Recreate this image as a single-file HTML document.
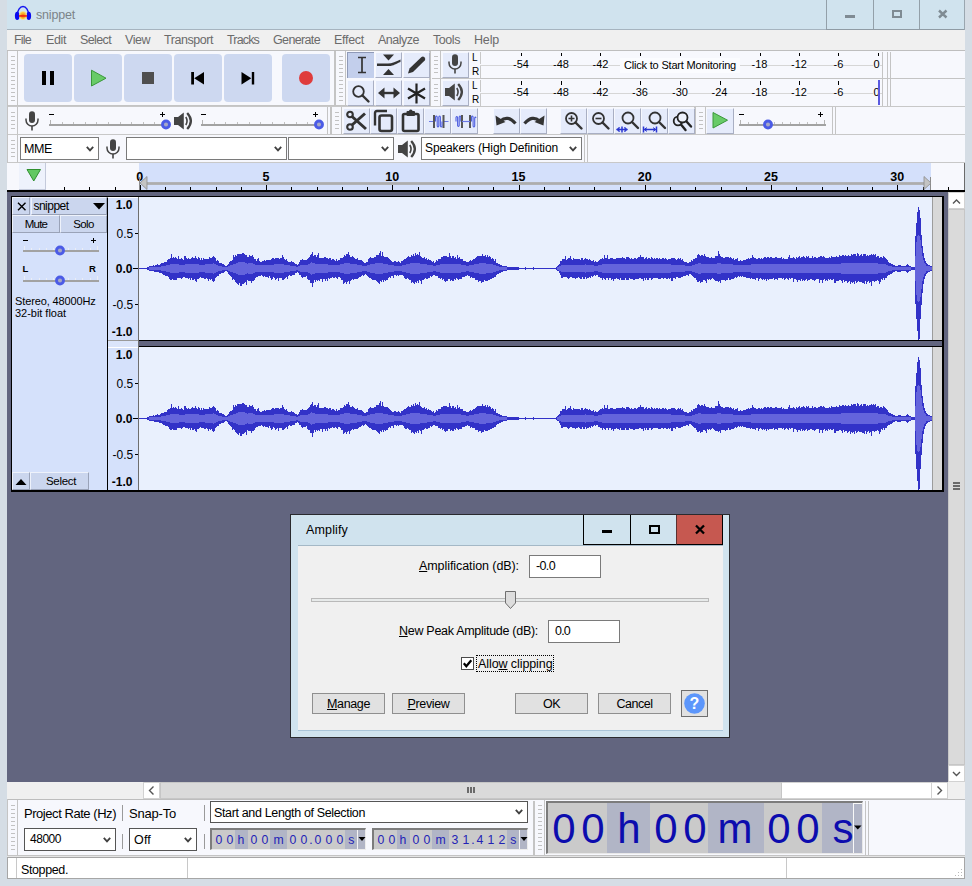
<!DOCTYPE html>
<html><head><meta charset="utf-8"><title>snippet</title>
<style>
html,body{margin:0;padding:0}
body{width:972px;height:886px;overflow:hidden;background:#d5dde5;position:relative;font-family:"Liberation Sans",sans-serif;font-size:12px;line-height:1.15}
div,svg{position:absolute;box-sizing:border-box}
svg{overflow:visible}
</style></head><body>
<div style="left:7px;top:0px;width:958px;height:879px;background:#f7f8fd;"></div>
<div style="left:7px;top:0px;width:958px;height:30px;background:#d0e3ee;border-bottom:1px solid #a6b4bf;"></div>
<div style="left:826px;top:29px;width:139px;height:1px;background:#8f9ba4;"></div>
<div style="left:964px;top:0px;width:1px;height:30px;background:#9aa6af;"></div>
<svg style="left:14px;top:5px;" width="18" height="16" viewBox="0 0 18 16">
<path d="M3.3 10.5 A5.7 9 0 0 1 14.7 10.5" fill="none" stroke="#1414f0" stroke-width="1.4"/>
<ellipse cx="3.2" cy="10.9" rx="2.3" ry="4.1" fill="#0a0af0"/>
<ellipse cx="14.8" cy="10.9" rx="2.3" ry="4.1" fill="#0a0af0"/>
<ellipse cx="9" cy="10.5" rx="3.8" ry="4.2" fill="#f8e27a"/>
<ellipse cx="9" cy="10.6" rx="2.9" ry="3.3" fill="#f9b730"/>
<ellipse cx="9" cy="10.8" rx="2" ry="2" fill="#f78a1c"/>
<rect x="5" y="10.2" width="8" height="1.5" fill="#f01a10"/>
</svg>
<div style="left:36px;top:8px;font-size:12.5px;color:#7c8388;white-space:nowrap;letter-spacing:-0.186px;">snippet</div>
<div style="left:826px;top:0px;width:1px;height:29px;background:#93a0a9;"></div>
<div style="left:873px;top:0px;width:1px;height:29px;background:#93a0a9;"></div>
<div style="left:919px;top:0px;width:1px;height:29px;background:#93a0a9;"></div>
<div style="left:845px;top:15px;width:10px;height:3px;background:#7f8b93;"></div>
<div style="left:892px;top:10px;width:10px;height:8px;border:2px solid #7f8b93;"></div>
<svg style="left:938px;top:10px;" width="10" height="8" viewBox="0 0 10 8"><path d="M1 0.5 L8.5 7.5 M8.5 0.5 L1 7.5" stroke="#7f8b93" stroke-width="2.4" fill="none"/></svg>
<div style="left:7px;top:30px;width:958px;height:21px;background:#f0f0f0;"></div>
<div style="left:14px;top:33px;font-size:12.5px;color:#6b6b6b;white-space:nowrap;letter-spacing:-0.785px;">File</div>
<div style="left:46px;top:33px;font-size:12.5px;color:#6b6b6b;white-space:nowrap;letter-spacing:-0.385px;">Edit</div>
<div style="left:80px;top:33px;font-size:12.5px;color:#6b6b6b;white-space:nowrap;letter-spacing:-0.623px;">Select</div>
<div style="left:125px;top:33px;font-size:12.5px;color:#6b6b6b;white-space:nowrap;letter-spacing:-0.467px;">View</div>
<div style="left:164px;top:33px;font-size:12.5px;color:#6b6b6b;white-space:nowrap;letter-spacing:-0.447px;">Transport</div>
<div style="left:227px;top:33px;font-size:12.5px;color:#6b6b6b;white-space:nowrap;letter-spacing:-0.839px;">Tracks</div>
<div style="left:273px;top:33px;font-size:12.5px;color:#6b6b6b;white-space:nowrap;letter-spacing:-0.639px;">Generate</div>
<div style="left:334px;top:33px;font-size:12.5px;color:#6b6b6b;white-space:nowrap;letter-spacing:-0.288px;">Effect</div>
<div style="left:378px;top:33px;font-size:12.5px;color:#6b6b6b;white-space:nowrap;letter-spacing:-0.496px;">Analyze</div>
<div style="left:433px;top:33px;font-size:12.5px;color:#6b6b6b;white-space:nowrap;letter-spacing:-0.436px;">Tools</div>
<div style="left:474px;top:33px;font-size:12.5px;color:#6b6b6b;white-space:nowrap;letter-spacing:-0.177px;">Help</div>
<div style="left:7px;top:50px;width:958px;height:1px;background:#bebebe;"></div>
<div style="left:8px;top:105px;width:423px;height:1px;background:#c4c4c4;"></div>
<div style="left:8px;top:106px;width:957px;height:1px;background:#c8c8c8;"></div>
<div style="left:8px;top:133px;width:10px;height:1px;background:#c4c4c4;"></div>
<div style="left:8px;top:134px;width:957px;height:1px;background:#c8c8c8;"></div>
<div style="left:8px;top:161px;width:10px;height:1px;background:#c4c4c4;"></div>
<div style="left:8px;top:162px;width:957px;height:1px;background:#c8c8c8;"></div>
<div style="left:7px;top:51px;width:1px;height:112px;background:#c4c4c4;"></div>
<div style="left:8px;top:51px;width:10px;height:54px;background:#f7f8fd;border-right:1px solid #c4c4c4;"></div>
<svg style="left:8px;top:51px;shape-rendering:crispEdges;" width="9" height="54" viewBox="0 0 9 54"><rect x="3" y="5" width="4" height="1" fill="#c2c2c2"/><rect x="3" y="9" width="4" height="1" fill="#c2c2c2"/><rect x="3" y="13" width="4" height="1" fill="#c2c2c2"/><rect x="3" y="17" width="4" height="1" fill="#c2c2c2"/><rect x="3" y="21" width="4" height="1" fill="#c2c2c2"/><rect x="3" y="25" width="4" height="1" fill="#c2c2c2"/><rect x="3" y="29" width="4" height="1" fill="#c2c2c2"/><rect x="3" y="33" width="4" height="1" fill="#c2c2c2"/><rect x="3" y="37" width="4" height="1" fill="#c2c2c2"/><rect x="3" y="41" width="4" height="1" fill="#c2c2c2"/><rect x="3" y="45" width="4" height="1" fill="#c2c2c2"/><rect x="3" y="49" width="4" height="1" fill="#c2c2c2"/></svg>
<div style="left:334px;top:51px;width:2px;height:54px;background:#c4c4c4;"></div>
<div style="left:336px;top:51px;width:10px;height:54px;background:#f7f8fd;border-right:1px solid #c4c4c4;"></div>
<svg style="left:336px;top:51px;shape-rendering:crispEdges;" width="9" height="54" viewBox="0 0 9 54"><rect x="3" y="5" width="4" height="1" fill="#c2c2c2"/><rect x="3" y="9" width="4" height="1" fill="#c2c2c2"/><rect x="3" y="13" width="4" height="1" fill="#c2c2c2"/><rect x="3" y="17" width="4" height="1" fill="#c2c2c2"/><rect x="3" y="21" width="4" height="1" fill="#c2c2c2"/><rect x="3" y="25" width="4" height="1" fill="#c2c2c2"/><rect x="3" y="29" width="4" height="1" fill="#c2c2c2"/><rect x="3" y="33" width="4" height="1" fill="#c2c2c2"/><rect x="3" y="37" width="4" height="1" fill="#c2c2c2"/><rect x="3" y="41" width="4" height="1" fill="#c2c2c2"/><rect x="3" y="45" width="4" height="1" fill="#c2c2c2"/><rect x="3" y="49" width="4" height="1" fill="#c2c2c2"/></svg>
<div style="left:429px;top:51px;width:2px;height:54px;background:#c4c4c4;"></div>
<div style="left:431px;top:51px;width:10px;height:27px;background:#f7f8fd;border-right:1px solid #c4c4c4;"></div>
<svg style="left:431px;top:51px;shape-rendering:crispEdges;" width="9" height="27" viewBox="0 0 9 27"><rect x="3" y="5" width="4" height="1" fill="#c2c2c2"/><rect x="3" y="9" width="4" height="1" fill="#c2c2c2"/><rect x="3" y="13" width="4" height="1" fill="#c2c2c2"/><rect x="3" y="17" width="4" height="1" fill="#c2c2c2"/><rect x="3" y="21" width="4" height="1" fill="#c2c2c2"/></svg>
<div style="left:431px;top:79px;width:10px;height:27px;background:#f7f8fd;border-right:1px solid #c4c4c4;"></div>
<svg style="left:431px;top:79px;shape-rendering:crispEdges;" width="9" height="27" viewBox="0 0 9 27"><rect x="3" y="5" width="4" height="1" fill="#c2c2c2"/><rect x="3" y="9" width="4" height="1" fill="#c2c2c2"/><rect x="3" y="13" width="4" height="1" fill="#c2c2c2"/><rect x="3" y="17" width="4" height="1" fill="#c2c2c2"/><rect x="3" y="21" width="4" height="1" fill="#c2c2c2"/></svg>
<div style="left:432px;top:78px;width:533px;height:1px;background:#c4c4c4;"></div>
<div style="left:8px;top:107px;width:10px;height:27px;background:#f7f8fd;border-right:1px solid #c4c4c4;"></div>
<svg style="left:8px;top:107px;shape-rendering:crispEdges;" width="9" height="27" viewBox="0 0 9 27"><rect x="3" y="5" width="4" height="1" fill="#c2c2c2"/><rect x="3" y="9" width="4" height="1" fill="#c2c2c2"/><rect x="3" y="13" width="4" height="1" fill="#c2c2c2"/><rect x="3" y="17" width="4" height="1" fill="#c2c2c2"/><rect x="3" y="21" width="4" height="1" fill="#c2c2c2"/></svg>
<div style="left:327px;top:107px;width:1px;height:27px;background:#c4c4c4;"></div>
<div style="left:330px;top:107px;width:2px;height:27px;background:#c4c4c4;"></div>
<div style="left:332px;top:107px;width:10px;height:27px;background:#f7f8fd;border-right:1px solid #c4c4c4;"></div>
<svg style="left:332px;top:107px;shape-rendering:crispEdges;" width="9" height="27" viewBox="0 0 9 27"><rect x="3" y="5" width="4" height="1" fill="#c2c2c2"/><rect x="3" y="9" width="4" height="1" fill="#c2c2c2"/><rect x="3" y="13" width="4" height="1" fill="#c2c2c2"/><rect x="3" y="17" width="4" height="1" fill="#c2c2c2"/><rect x="3" y="21" width="4" height="1" fill="#c2c2c2"/></svg>
<div style="left:694px;top:107px;width:2px;height:27px;background:#c4c4c4;"></div>
<div style="left:696px;top:107px;width:10px;height:27px;background:#f7f8fd;border-right:1px solid #c4c4c4;"></div>
<svg style="left:696px;top:107px;shape-rendering:crispEdges;" width="9" height="27" viewBox="0 0 9 27"><rect x="3" y="5" width="4" height="1" fill="#c2c2c2"/><rect x="3" y="9" width="4" height="1" fill="#c2c2c2"/><rect x="3" y="13" width="4" height="1" fill="#c2c2c2"/><rect x="3" y="17" width="4" height="1" fill="#c2c2c2"/><rect x="3" y="21" width="4" height="1" fill="#c2c2c2"/></svg>
<div style="left:832px;top:107px;width:1px;height:27px;background:#c4c4c4;"></div>
<div style="left:835px;top:107px;width:1px;height:27px;background:#c4c4c4;"></div>
<div style="left:8px;top:135px;width:10px;height:27px;background:#f7f8fd;border-right:1px solid #c4c4c4;"></div>
<svg style="left:8px;top:135px;shape-rendering:crispEdges;" width="9" height="27" viewBox="0 0 9 27"><rect x="3" y="5" width="4" height="1" fill="#c2c2c2"/><rect x="3" y="9" width="4" height="1" fill="#c2c2c2"/><rect x="3" y="13" width="4" height="1" fill="#c2c2c2"/><rect x="3" y="17" width="4" height="1" fill="#c2c2c2"/><rect x="3" y="21" width="4" height="1" fill="#c2c2c2"/></svg>
<div style="left:584px;top:135px;width:1px;height:27px;background:#c4c4c4;"></div>
<div style="left:587px;top:135px;width:1px;height:27px;background:#c4c4c4;"></div>
<div style="left:882px;top:52px;width:1px;height:54px;background:#c4c4c4;"></div>
<div style="left:887px;top:52px;width:1px;height:54px;background:#c4c4c4;"></div>
<div style="left:890px;top:52px;width:1px;height:54px;background:#c4c4c4;"></div>
<div style="left:24px;top:54px;width:48px;height:48px;background:#cdd8f0;border-radius:4px;"></div>
<div style="left:74px;top:54px;width:48px;height:48px;background:#cdd8f0;border-radius:4px;"></div>
<div style="left:124px;top:54px;width:48px;height:48px;background:#cdd8f0;border-radius:4px;"></div>
<div style="left:174px;top:54px;width:48px;height:48px;background:#cdd8f0;border-radius:4px;"></div>
<div style="left:224px;top:54px;width:48px;height:48px;background:#cdd8f0;border-radius:4px;"></div>
<div style="left:282px;top:54px;width:48px;height:48px;background:#cdd8f0;border-radius:4px;"></div>
<div style="left:41.7px;top:71px;width:4.2px;height:14px;background:#000;"></div>
<div style="left:49.5px;top:71px;width:4.2px;height:14px;background:#000;"></div>
<svg style="left:90px;top:69px;" width="18" height="18" viewBox="0 0 18 18"><path d="M1.5 1.2 L16 9.2 L1.5 17 Z" fill="#68cb68" stroke="#3a983a" stroke-width="1"/></svg>
<div style="left:142px;top:71.5px;width:12px;height:12.5px;background:#4f4f4f;"></div>
<svg style="left:190px;top:71px;" width="16" height="14" viewBox="0 0 16 14"><rect x="1.2" y="1" width="2.8" height="12.5" fill="#000"/><path d="M14 1 L14 13.5 L4.2 7.25 Z" fill="#000"/></svg>
<svg style="left:240px;top:71px;" width="16" height="14" viewBox="0 0 16 14"><rect x="11.8" y="1" width="2.4" height="12.5" fill="#000"/><path d="M1.5 1 L1.5 13.5 L11.3 7.25 Z" fill="#000"/></svg>
<div style="left:299px;top:70.5px;width:14px;height:14px;background:#df3c3c;border-radius:7px;"></div>
<div style="left:347px;top:52px;width:27px;height:26px;background:#c3cfec;border-top:1px solid #8f9ab8;border-left:1px solid #8f9ab8;"></div>
<div style="left:375px;top:52px;width:27px;height:26px;background:#e5ebfb;border-right:1px solid #a9afc3;border-bottom:1px solid #a9afc3;border-top:1px solid #f6f8fe;border-left:1px solid #f6f8fe;"></div>
<div style="left:403px;top:52px;width:27px;height:26px;background:#e5ebfb;border-right:1px solid #a9afc3;border-bottom:1px solid #a9afc3;border-top:1px solid #f6f8fe;border-left:1px solid #f6f8fe;"></div>
<div style="left:347px;top:80px;width:27px;height:26px;background:#e5ebfb;border-right:1px solid #a9afc3;border-bottom:1px solid #a9afc3;border-top:1px solid #f6f8fe;border-left:1px solid #f6f8fe;"></div>
<div style="left:375px;top:80px;width:27px;height:26px;background:#e5ebfb;border-right:1px solid #a9afc3;border-bottom:1px solid #a9afc3;border-top:1px solid #f6f8fe;border-left:1px solid #f6f8fe;"></div>
<div style="left:403px;top:80px;width:27px;height:26px;background:#e5ebfb;border-right:1px solid #a9afc3;border-bottom:1px solid #a9afc3;border-top:1px solid #f6f8fe;border-left:1px solid #f6f8fe;"></div>
<svg style="left:347px;top:52px;" width="27" height="26" viewBox="0 0 27 26"><path d="M11 5.5 H19 M11 20.5 H19 M15 5.5 V20.5" stroke="#333" stroke-width="1.7" fill="none"/></svg>
<svg style="left:375px;top:52px;" width="27" height="26" viewBox="0 0 27 26"><path d="M8 2.5 H19 L13.5 8.5 Z" fill="#333"/><path d="M8 23 H19 L13.5 17 Z" fill="#333"/><path d="M2 11.5 H13 C17 11.5 21 9.5 25.5 7.5 L25.5 10 C21 11.5 18 14.5 13 14 H2 Z" fill="#333"/></svg>
<svg style="left:403px;top:52px;" width="27" height="26" viewBox="0 0 27 26"><path d="M5 21.5 L6.5 16.5 L18.5 5 Q20 3.8 21.6 5.4 Q23 7 21.7 8.4 L10 20 Z" fill="#333"/></svg>
<svg style="left:347px;top:80px;" width="27" height="26" viewBox="0 0 27 26"><circle cx="11.5" cy="11.5" r="5.3" fill="none" stroke="#333" stroke-width="1.8"/><path d="M15.5 15.5 L21.5 21.5" stroke="#333" stroke-width="2.4" stroke-linecap="round"/></svg>
<svg style="left:375px;top:80px;" width="27" height="26" viewBox="0 0 27 26"><path d="M7 13 H21" stroke="#333" stroke-width="2.4"/><path d="M9.5 7.5 L3 13 L9.5 18.5 Z M18.5 7.5 L25 13 L18.5 18.5 Z" fill="#333"/></svg>
<svg style="left:403px;top:80px;" width="27" height="26" viewBox="0 0 27 26"><path d="M13.5 3.5 V23.5 M5 8.5 L22 18.5 M22 8.5 L5 18.5" stroke="#222" stroke-width="2.2" fill="none"/></svg>
<div style="left:442px;top:52px;width:27px;height:26px;background:#e5ebfb;border-right:1px solid #a9afc3;border-bottom:1px solid #a9afc3;border-top:1px solid #f6f8fe;border-left:1px solid #f6f8fe;"></div>
<div style="left:442px;top:80px;width:27px;height:26px;background:#e5ebfb;border-right:1px solid #a9afc3;border-bottom:1px solid #a9afc3;border-top:1px solid #f6f8fe;border-left:1px solid #f6f8fe;"></div>
<svg style="left:447px;top:54px;" width="16" height="22" viewBox="0 0 16 22"><rect x="5" y="0.2" width="6" height="11.8" rx="3" fill="#444"/><path d="M2 7.5 v1.5 a6 6 0 0 0 12 0 v-1.5" fill="none" stroke="#444" stroke-width="1.5"/><path d="M8 15 v4.5" stroke="#444" stroke-width="1.6"/></svg>
<svg style="left:444px;top:80.5px;" width="20" height="22" viewBox="0 0 20 22"><path d="M1 7 H5 L10.8 2.5 V19.5 L5 15 H1 Z" fill="#444"/><path d="M12.8 7 Q15.3 11 12.8 15" fill="none" stroke="#444" stroke-width="1.6"/><path d="M14.2 3 Q21.5 11 14.2 19" fill="none" stroke="#444" stroke-width="2.3"/></svg>
<div style="left:472px;top:51.8px;font-size:10px;color:#000;white-space:nowrap;">L</div>
<div style="left:472px;top:65.7px;font-size:10px;color:#000;white-space:nowrap;">R</div>
<div style="left:480px;top:52px;width:1px;height:12px;background:#c8c8c8;"></div>
<div style="left:480px;top:66px;width:1px;height:12px;background:#c8c8c8;"></div>
<div style="left:472px;top:79.8px;font-size:10px;color:#000;white-space:nowrap;">L</div>
<div style="left:472px;top:93.7px;font-size:10px;color:#000;white-space:nowrap;">R</div>
<div style="left:480px;top:80px;width:1px;height:12px;background:#c8c8c8;"></div>
<div style="left:480px;top:94px;width:1px;height:12px;background:#c8c8c8;"></div>
<div style="left:480px;top:65px;width:402px;height:1px;background:#d6d6d6;"></div>
<div style="left:480px;top:93px;width:402px;height:1px;background:#d6d6d6;"></div>
<div style="left:521px;top:53px;width:1px;height:3px;background:#000;"></div>
<div style="left:513.052px;top:58px;font-size:11px;color:#000;white-space:nowrap;background:#f7f8fd;">-54</div>
<div style="left:561px;top:53px;width:1px;height:3px;background:#000;"></div>
<div style="left:553.052px;top:58px;font-size:11px;color:#000;white-space:nowrap;background:#f7f8fd;">-48</div>
<div style="left:600px;top:53px;width:1px;height:3px;background:#000;"></div>
<div style="left:592.552px;top:58px;font-size:11px;color:#000;white-space:nowrap;background:#f7f8fd;">-42</div>
<div style="left:640px;top:53px;width:1px;height:3px;background:#000;"></div>
<div style="left:680px;top:53px;width:1px;height:3px;background:#000;"></div>
<div style="left:720px;top:53px;width:1px;height:3px;background:#000;"></div>
<div style="left:760px;top:53px;width:1px;height:3px;background:#000;"></div>
<div style="left:751.552px;top:58px;font-size:11px;color:#000;white-space:nowrap;background:#f7f8fd;">-18</div>
<div style="left:799px;top:53px;width:1px;height:3px;background:#000;"></div>
<div style="left:791.052px;top:58px;font-size:11px;color:#000;white-space:nowrap;background:#f7f8fd;">-12</div>
<div style="left:838px;top:53px;width:1px;height:3px;background:#000;"></div>
<div style="left:833.61px;top:58px;font-size:11px;color:#000;white-space:nowrap;background:#f7f8fd;">-6</div>
<div style="left:878px;top:53px;width:1px;height:3px;background:#000;"></div>
<div style="left:873.441px;top:58px;font-size:11px;color:#000;white-space:nowrap;background:#f7f8fd;">0</div>
<div style="left:521px;top:81px;width:1px;height:4px;background:#000;"></div>
<div style="left:513.052px;top:86px;font-size:11px;color:#000;white-space:nowrap;background:#f7f8fd;">-54</div>
<div style="left:561px;top:81px;width:1px;height:4px;background:#000;"></div>
<div style="left:553.052px;top:86px;font-size:11px;color:#000;white-space:nowrap;background:#f7f8fd;">-48</div>
<div style="left:600px;top:81px;width:1px;height:4px;background:#000;"></div>
<div style="left:592.552px;top:86px;font-size:11px;color:#000;white-space:nowrap;background:#f7f8fd;">-42</div>
<div style="left:640px;top:81px;width:1px;height:4px;background:#000;"></div>
<div style="left:632.052px;top:86px;font-size:11px;color:#000;white-space:nowrap;background:#f7f8fd;">-36</div>
<div style="left:680px;top:81px;width:1px;height:4px;background:#000;"></div>
<div style="left:672.052px;top:86px;font-size:11px;color:#000;white-space:nowrap;background:#f7f8fd;">-30</div>
<div style="left:720px;top:81px;width:1px;height:4px;background:#000;"></div>
<div style="left:711.552px;top:86px;font-size:11px;color:#000;white-space:nowrap;background:#f7f8fd;">-24</div>
<div style="left:760px;top:81px;width:1px;height:4px;background:#000;"></div>
<div style="left:751.552px;top:86px;font-size:11px;color:#000;white-space:nowrap;background:#f7f8fd;">-18</div>
<div style="left:799px;top:81px;width:1px;height:4px;background:#000;"></div>
<div style="left:791.052px;top:86px;font-size:11px;color:#000;white-space:nowrap;background:#f7f8fd;">-12</div>
<div style="left:838px;top:81px;width:1px;height:4px;background:#000;"></div>
<div style="left:833.61px;top:86px;font-size:11px;color:#000;white-space:nowrap;background:#f7f8fd;">-6</div>
<div style="left:878px;top:81px;width:1px;height:4px;background:#000;"></div>
<div style="left:873.441px;top:86px;font-size:11px;color:#000;white-space:nowrap;background:#f7f8fd;">0</div>
<div style="left:620px;top:57.5px;width:120px;height:15px;background:#fbfcff;"></div>
<div style="left:624px;top:58.5px;font-size:11px;color:#000;white-space:nowrap;letter-spacing:-0.190px;">Click to Start Monitoring</div>
<div style="left:878px;top:80px;width:2px;height:25px;background:#5a5ae0;"></div>
<svg style="left:24px;top:111px;" width="16" height="22" viewBox="0 0 16 22"><rect x="5" y="0.2" width="6" height="11.8" rx="3" fill="#444"/><path d="M2 7.5 v1.5 a6 6 0 0 0 12 0 v-1.5" fill="none" stroke="#444" stroke-width="1.5"/><path d="M8 15 v4.5" stroke="#444" stroke-width="1.6"/></svg>
<div style="left:49px;top:124px;width:119px;height:2px;background:#a2a2a2;"></div>
<div style="left:50px;top:120px;width:1px;height:4px;background:#b4b4b4;"></div>
<div style="left:62px;top:122px;width:1px;height:2px;background:#c0c0c0;"></div>
<div style="left:73px;top:122px;width:1px;height:2px;background:#c0c0c0;"></div>
<div style="left:85px;top:122px;width:1px;height:2px;background:#c0c0c0;"></div>
<div style="left:96px;top:122px;width:1px;height:2px;background:#c0c0c0;"></div>
<div style="left:108px;top:122px;width:1px;height:2px;background:#c0c0c0;"></div>
<div style="left:120px;top:122px;width:1px;height:2px;background:#c0c0c0;"></div>
<div style="left:131px;top:122px;width:1px;height:2px;background:#c0c0c0;"></div>
<div style="left:143px;top:122px;width:1px;height:2px;background:#c0c0c0;"></div>
<div style="left:154px;top:122px;width:1px;height:2px;background:#c0c0c0;"></div>
<div style="left:166px;top:120px;width:1px;height:4px;background:#b4b4b4;"></div>
<div style="left:49px;top:114px;width:5px;height:1px;background:#000;"></div>
<div style="left:160px;top:114px;width:5px;height:1px;background:#000;"></div>
<div style="left:162px;top:112px;width:1px;height:5px;background:#000;"></div>
<svg style="left:160px;top:119px;" width="12" height="12" viewBox="0 0 12 12"><circle cx="6" cy="5.5" r="3.5" fill="#a6a8c6" stroke="#4b5be6" stroke-width="2.9"/></svg>
<svg style="left:173px;top:110px;" width="20" height="22" viewBox="0 0 20 22"><path d="M1 7 H5 L10.8 2.5 V19.5 L5 15 H1 Z" fill="#444"/><path d="M12.8 7 Q15.3 11 12.8 15" fill="none" stroke="#444" stroke-width="1.6"/><path d="M14.2 3 Q21.5 11 14.2 19" fill="none" stroke="#444" stroke-width="2.3"/></svg>
<div style="left:201px;top:124px;width:120px;height:2px;background:#a2a2a2;"></div>
<div style="left:202px;top:120px;width:1px;height:4px;background:#b4b4b4;"></div>
<div style="left:214px;top:122px;width:1px;height:2px;background:#c0c0c0;"></div>
<div style="left:225px;top:122px;width:1px;height:2px;background:#c0c0c0;"></div>
<div style="left:237px;top:122px;width:1px;height:2px;background:#c0c0c0;"></div>
<div style="left:249px;top:122px;width:1px;height:2px;background:#c0c0c0;"></div>
<div style="left:260px;top:122px;width:1px;height:2px;background:#c0c0c0;"></div>
<div style="left:272px;top:122px;width:1px;height:2px;background:#c0c0c0;"></div>
<div style="left:284px;top:122px;width:1px;height:2px;background:#c0c0c0;"></div>
<div style="left:296px;top:122px;width:1px;height:2px;background:#c0c0c0;"></div>
<div style="left:307px;top:122px;width:1px;height:2px;background:#c0c0c0;"></div>
<div style="left:319px;top:120px;width:1px;height:4px;background:#b4b4b4;"></div>
<div style="left:201px;top:114px;width:5px;height:1px;background:#000;"></div>
<div style="left:313px;top:114px;width:5px;height:1px;background:#000;"></div>
<div style="left:315px;top:112px;width:1px;height:5px;background:#000;"></div>
<svg style="left:313px;top:119px;" width="12" height="12" viewBox="0 0 12 12"><circle cx="6" cy="5.5" r="3.5" fill="#a6a8c6" stroke="#4b5be6" stroke-width="2.9"/></svg>
<div style="left:343px;top:108px;width:27px;height:26px;background:#e5ebfb;border-right:1px solid #a9afc3;border-bottom:1px solid #a9afc3;border-top:1px solid #f6f8fe;border-left:1px solid #f6f8fe;"></div>
<div style="left:370px;top:108px;width:27px;height:26px;background:#e5ebfb;border-right:1px solid #a9afc3;border-bottom:1px solid #a9afc3;border-top:1px solid #f6f8fe;border-left:1px solid #f6f8fe;"></div>
<div style="left:397px;top:108px;width:27px;height:26px;background:#e5ebfb;border-right:1px solid #a9afc3;border-bottom:1px solid #a9afc3;border-top:1px solid #f6f8fe;border-left:1px solid #f6f8fe;"></div>
<div style="left:424px;top:108px;width:27px;height:26px;background:#e5ebfb;border-right:1px solid #a9afc3;border-bottom:1px solid #a9afc3;border-top:1px solid #f6f8fe;border-left:1px solid #f6f8fe;"></div>
<div style="left:451px;top:108px;width:27px;height:26px;background:#e5ebfb;border-right:1px solid #a9afc3;border-bottom:1px solid #a9afc3;border-top:1px solid #f6f8fe;border-left:1px solid #f6f8fe;"></div>
<div style="left:493px;top:108px;width:27px;height:26px;background:#e5ebfb;border-right:1px solid #a9afc3;border-bottom:1px solid #a9afc3;border-top:1px solid #f6f8fe;border-left:1px solid #f6f8fe;"></div>
<div style="left:520px;top:108px;width:27px;height:26px;background:#e5ebfb;border-right:1px solid #a9afc3;border-bottom:1px solid #a9afc3;border-top:1px solid #f6f8fe;border-left:1px solid #f6f8fe;"></div>
<div style="left:560px;top:108px;width:27px;height:26px;background:#e5ebfb;border-right:1px solid #a9afc3;border-bottom:1px solid #a9afc3;border-top:1px solid #f6f8fe;border-left:1px solid #f6f8fe;"></div>
<div style="left:587px;top:108px;width:27px;height:26px;background:#e5ebfb;border-right:1px solid #a9afc3;border-bottom:1px solid #a9afc3;border-top:1px solid #f6f8fe;border-left:1px solid #f6f8fe;"></div>
<div style="left:614px;top:108px;width:27px;height:26px;background:#e5ebfb;border-right:1px solid #a9afc3;border-bottom:1px solid #a9afc3;border-top:1px solid #f6f8fe;border-left:1px solid #f6f8fe;"></div>
<div style="left:641px;top:108px;width:27px;height:26px;background:#e5ebfb;border-right:1px solid #a9afc3;border-bottom:1px solid #a9afc3;border-top:1px solid #f6f8fe;border-left:1px solid #f6f8fe;"></div>
<div style="left:668px;top:108px;width:27px;height:26px;background:#e5ebfb;border-right:1px solid #a9afc3;border-bottom:1px solid #a9afc3;border-top:1px solid #f6f8fe;border-left:1px solid #f6f8fe;"></div>
<svg style="left:343px;top:108px;" width="27" height="26" viewBox="0 0 27 26"><circle cx="7" cy="6.5" r="2.8" fill="none" stroke="#333" stroke-width="2.1"/><circle cx="7" cy="19" r="2.8" fill="none" stroke="#333" stroke-width="2.1"/><path d="M9 8.5 L23 21 M9 17 L22 5.5" stroke="#333" stroke-width="3" fill="none"/></svg>
<svg style="left:370px;top:108px;" width="27" height="26" viewBox="0 0 27 26"><path d="M5 17.5 V5 Q5 3 7 3 H17" fill="none" stroke="#333" stroke-width="2.4"/><rect x="9.5" y="7.5" width="12.5" height="15.5" rx="2" fill="none" stroke="#333" stroke-width="2.6"/></svg>
<svg style="left:397px;top:108px;" width="27" height="26" viewBox="0 0 27 26"><rect x="6" y="6" width="15.5" height="17" rx="1.5" fill="none" stroke="#333" stroke-width="2.6"/><rect x="9.5" y="3" width="8.5" height="5" rx="1" fill="#333"/><circle cx="13.75" cy="3.3" r="1.8" fill="#333"/></svg>
<svg style="left:424px;top:108px;" width="27" height="26" viewBox="0 0 27 26"><path d="M5 13.5 H9 M20 13.5 H24.5" stroke="#6a78e6" stroke-width="1.2"/><path d="M10 7 V20 M19.5 7 V20" stroke="#555" stroke-width="2"/><path d="M11.5 13.5 V9 Q12.4 7 13.2 9 V18 Q14 20 14.8 18 V9 Q15.6 7 16.4 9 V18 Q17.2 20 18 18 V13.5" stroke="#5060e0" stroke-width="1.1" fill="none"/></svg>
<svg style="left:451px;top:108px;" width="27" height="26" viewBox="0 0 27 26"><path d="M5 13.5 V9.5 Q5.8 7.5 6.6 9.5 V17.5 Q7.4 19.5 8.2 17.5 V9 Q9 7 9.8 9 V13.5 M20.5 13.5 V9 Q21.3 7 22.1 9 V18 Q22.9 20 23.7 18 V10 Q24.3 8 25 10" stroke="#5060e0" stroke-width="1.1" fill="none"/><path d="M11 7 V20 M19 7 V20" stroke="#555" stroke-width="2"/><path d="M11 13.5 H19" stroke="#6a78e6" stroke-width="1.2"/></svg>
<svg style="left:493px;top:108px;" width="27" height="26" viewBox="0 0 27 26"><path d="M7.5 13 Q14.5 6.5 22.5 15.5" fill="none" stroke="#333" stroke-width="3.2"/><path d="M2.5 7.5 L3.5 17.5 L12.5 14 Z" fill="#333"/></svg>
<svg style="left:520px;top:108px;" width="27" height="26" viewBox="0 0 27 26"><path d="M19.5 13 Q12.5 6.5 4.5 15.5" fill="none" stroke="#333" stroke-width="3.2"/><path d="M24.5 7.5 L23.5 17.5 L14.5 14 Z" fill="#333"/></svg>
<svg style="left:560px;top:108px;" width="27" height="26" viewBox="0 0 27 26"><circle cx="11.5" cy="10.5" r="5.5" fill="none" stroke="#333" stroke-width="1.8"/><path d="M15.5 14.5 L21.5 20.5" stroke="#333" stroke-width="2.4" stroke-linecap="round"/><path d="M8.5 10.5 H14.5 M11.5 7.5 V13.5" stroke="#333" stroke-width="1.6"/></svg>
<svg style="left:587px;top:108px;" width="27" height="26" viewBox="0 0 27 26"><circle cx="11.5" cy="10.5" r="5.5" fill="none" stroke="#333" stroke-width="1.8"/><path d="M15.5 14.5 L21.5 20.5" stroke="#333" stroke-width="2.4" stroke-linecap="round"/><path d="M8.5 10.5 H14.5" stroke="#333" stroke-width="1.6"/></svg>
<svg style="left:614px;top:108px;" width="27" height="26" viewBox="0 0 27 26"><circle cx="14" cy="10" r="5.5" fill="none" stroke="#333" stroke-width="1.8"/><path d="M18 14 L24 20" stroke="#333" stroke-width="2.4" stroke-linecap="round"/><path d="M2.5 21.5 H13.5 M8 18.5 V24.5" stroke="#2a36d0" stroke-width="1.5"/><path d="M5.5 19 L3 21.5 L5.5 24 M10.5 19 L13 21.5 L10.5 24" fill="#2a36d0" stroke="#2a36d0" stroke-width="1"/></svg>
<svg style="left:641px;top:108px;" width="27" height="26" viewBox="0 0 27 26"><circle cx="14" cy="10" r="5.5" fill="none" stroke="#333" stroke-width="1.8"/><path d="M18 14 L24 20" stroke="#333" stroke-width="2.4" stroke-linecap="round"/><path d="M2.5 21.5 H15.5 M2.5 18.5 V24.5 M15.5 18.5 V24.5" stroke="#2a36d0" stroke-width="1.5"/><path d="M5.5 19.5 L3.5 21.5 L5.5 23.5 M12.5 19.5 L14.5 21.5 L12.5 23.5" fill="#2a36d0" stroke="#2a36d0" stroke-width="1"/></svg>
<svg style="left:668px;top:108px;" width="27" height="26" viewBox="0 0 27 26"><circle cx="10" cy="13" r="4.3" fill="none" stroke="#222" stroke-width="1.8"/><circle cx="14.5" cy="9.5" r="5" fill="#eef2fc" stroke="#222" stroke-width="1.8"/><path d="M13 16.5 L17.5 22 M18.5 13.5 L23 18.5" stroke="#222" stroke-width="2.4" stroke-linecap="round"/></svg>
<div style="left:706px;top:108px;width:28px;height:26px;background:#e5ebfb;border-right:1px solid #a9afc3;border-bottom:1px solid #a9afc3;border-top:1px solid #f6f8fe;border-left:1px solid #f6f8fe;"></div>
<svg style="left:706px;top:108px;" width="28" height="26" viewBox="0 0 28 26"><path d="M7 4.5 L21.5 12.2 L7 20 Z" fill="#68cb68" stroke="#3a983a" stroke-width="1"/></svg>
<div style="left:739px;top:124px;width:87px;height:2px;background:#a2a2a2;"></div>
<div style="left:740px;top:120px;width:1px;height:4px;background:#b4b4b4;"></div>
<div style="left:748px;top:122px;width:1px;height:2px;background:#c0c0c0;"></div>
<div style="left:757px;top:122px;width:1px;height:2px;background:#c0c0c0;"></div>
<div style="left:765px;top:122px;width:1px;height:2px;background:#c0c0c0;"></div>
<div style="left:774px;top:122px;width:1px;height:2px;background:#c0c0c0;"></div>
<div style="left:782px;top:122px;width:1px;height:2px;background:#c0c0c0;"></div>
<div style="left:790px;top:122px;width:1px;height:2px;background:#c0c0c0;"></div>
<div style="left:799px;top:122px;width:1px;height:2px;background:#c0c0c0;"></div>
<div style="left:807px;top:122px;width:1px;height:2px;background:#c0c0c0;"></div>
<div style="left:816px;top:122px;width:1px;height:2px;background:#c0c0c0;"></div>
<div style="left:824px;top:120px;width:1px;height:4px;background:#b4b4b4;"></div>
<div style="left:739px;top:114px;width:5px;height:1px;background:#000;"></div>
<div style="left:818px;top:114px;width:5px;height:1px;background:#000;"></div>
<div style="left:820px;top:112px;width:1px;height:5px;background:#000;"></div>
<svg style="left:762px;top:119px;" width="12" height="12" viewBox="0 0 12 12"><circle cx="6" cy="5.5" r="3.5" fill="#a6a8c6" stroke="#4b5be6" stroke-width="2.9"/></svg>
<div style="left:20px;top:137px;width:79px;height:23px;background:#fff;border:1px solid #7a7a7a;"></div>
<div style="left:24px;top:142.113px;font-size:12.5px;color:#000;white-space:nowrap;letter-spacing:-0.387px;">MME</div>
<svg style="left:85px;top:145.5px;" width="9" height="6" viewBox="0 0 9 6"><path d="M1.8 0.8 L5 4.4 L8.2 0.8" fill="none" stroke="#404040" stroke-width="1.8"/></svg>
<svg style="left:105px;top:139px;" width="16" height="22" viewBox="0 0 16 22"><rect x="5" y="0.2" width="6" height="11.8" rx="3" fill="#444"/><path d="M2 7.5 v1.5 a6 6 0 0 0 12 0 v-1.5" fill="none" stroke="#444" stroke-width="1.5"/><path d="M8 15 v4.5" stroke="#444" stroke-width="1.6"/></svg>
<div style="left:126px;top:137px;width:161px;height:23px;background:#fff;border:1px solid #7a7a7a;"></div>
<svg style="left:273px;top:145.5px;" width="9" height="6" viewBox="0 0 9 6"><path d="M1.8 0.8 L5 4.4 L8.2 0.8" fill="none" stroke="#404040" stroke-width="1.8"/></svg>
<div style="left:288px;top:137px;width:106px;height:23px;background:#fff;border:1px solid #7a7a7a;"></div>
<svg style="left:380px;top:145.5px;" width="9" height="6" viewBox="0 0 9 6"><path d="M1.8 0.8 L5 4.4 L8.2 0.8" fill="none" stroke="#404040" stroke-width="1.8"/></svg>
<svg style="left:397px;top:138px;" width="20" height="22" viewBox="0 0 20 22"><path d="M1 7 H5 L10.8 2.5 V19.5 L5 15 H1 Z" fill="#444"/><path d="M12.8 7 Q15.3 11 12.8 15" fill="none" stroke="#444" stroke-width="1.6"/><path d="M14.2 3 Q21.5 11 14.2 19" fill="none" stroke="#444" stroke-width="2.3"/></svg>
<div style="left:421px;top:137px;width:161px;height:23px;background:#fff;border:1px solid #7a7a7a;"></div>
<div style="left:425px;top:142.4px;font-size:12px;color:#000;white-space:nowrap;letter-spacing:-0.122px;">Speakers (High Definition</div>
<svg style="left:568px;top:145.5px;" width="9" height="6" viewBox="0 0 9 6"><path d="M1.8 0.8 L5 4.4 L8.2 0.8" fill="none" stroke="#404040" stroke-width="1.8"/></svg>
<div style="left:8px;top:163px;width:957px;height:27px;background:#f7f8fd;"></div>
<div style="left:139px;top:163px;width:792px;height:27px;background:#d4e0fb;"></div>
<div style="left:19px;top:163px;width:27px;height:27px;background:#eef2fc;border-right:1px solid #c4cadb;border-bottom:1px solid #c4cadb;"></div>
<svg style="left:20px;top:164px;" width="27" height="25" viewBox="0 0 27 25"><path d="M7 5.5 L20.5 5.5 L13.75 17 Z" fill="#62c862" stroke="#2f8f2f" stroke-width="1"/></svg>
<div style="left:64px;top:187px;width:1px;height:3px;background:#000;"></div>
<div style="left:89px;top:187px;width:1px;height:3px;background:#000;"></div>
<div style="left:115px;top:187px;width:1px;height:3px;background:#000;"></div>
<div style="left:140px;top:185px;width:1px;height:5px;background:#000;"></div>
<div style="left:165px;top:187px;width:1px;height:3px;background:#000;"></div>
<div style="left:190px;top:187px;width:1px;height:3px;background:#000;"></div>
<div style="left:216px;top:187px;width:1px;height:3px;background:#000;"></div>
<div style="left:241px;top:187px;width:1px;height:3px;background:#000;"></div>
<div style="left:266px;top:185px;width:1px;height:5px;background:#000;"></div>
<div style="left:291px;top:187px;width:1px;height:3px;background:#000;"></div>
<div style="left:317px;top:187px;width:1px;height:3px;background:#000;"></div>
<div style="left:342px;top:187px;width:1px;height:3px;background:#000;"></div>
<div style="left:367px;top:187px;width:1px;height:3px;background:#000;"></div>
<div style="left:392px;top:185px;width:1px;height:5px;background:#000;"></div>
<div style="left:418px;top:187px;width:1px;height:3px;background:#000;"></div>
<div style="left:443px;top:187px;width:1px;height:3px;background:#000;"></div>
<div style="left:468px;top:187px;width:1px;height:3px;background:#000;"></div>
<div style="left:493px;top:187px;width:1px;height:3px;background:#000;"></div>
<div style="left:519px;top:185px;width:1px;height:5px;background:#000;"></div>
<div style="left:544px;top:187px;width:1px;height:3px;background:#000;"></div>
<div style="left:569px;top:187px;width:1px;height:3px;background:#000;"></div>
<div style="left:594px;top:187px;width:1px;height:3px;background:#000;"></div>
<div style="left:620px;top:187px;width:1px;height:3px;background:#000;"></div>
<div style="left:645px;top:185px;width:1px;height:5px;background:#000;"></div>
<div style="left:670px;top:187px;width:1px;height:3px;background:#000;"></div>
<div style="left:695px;top:187px;width:1px;height:3px;background:#000;"></div>
<div style="left:721px;top:187px;width:1px;height:3px;background:#000;"></div>
<div style="left:746px;top:187px;width:1px;height:3px;background:#000;"></div>
<div style="left:771px;top:185px;width:1px;height:5px;background:#000;"></div>
<div style="left:796px;top:187px;width:1px;height:3px;background:#000;"></div>
<div style="left:822px;top:187px;width:1px;height:3px;background:#000;"></div>
<div style="left:847px;top:187px;width:1px;height:3px;background:#000;"></div>
<div style="left:872px;top:187px;width:1px;height:3px;background:#000;"></div>
<div style="left:897px;top:185px;width:1px;height:5px;background:#000;"></div>
<div style="left:923px;top:187px;width:1px;height:3px;background:#000;"></div>
<div style="left:948px;top:187px;width:1px;height:3px;background:#000;"></div>
<div style="left:136.324px;top:169.5px;font-size:12.5px;color:#000;white-space:nowrap;font-weight:bold;">0</div>
<div style="left:262.574px;top:169.5px;font-size:12.5px;color:#000;white-space:nowrap;font-weight:bold;">5</div>
<div style="left:385.349px;top:169.5px;font-size:12.5px;color:#000;white-space:nowrap;font-weight:bold;">10</div>
<div style="left:511.599px;top:169.5px;font-size:12.5px;color:#000;white-space:nowrap;font-weight:bold;">15</div>
<div style="left:637.849px;top:169.5px;font-size:12.5px;color:#000;white-space:nowrap;font-weight:bold;">20</div>
<div style="left:764.099px;top:169.5px;font-size:12.5px;color:#000;white-space:nowrap;font-weight:bold;">25</div>
<div style="left:890.349px;top:169.5px;font-size:12.5px;color:#000;white-space:nowrap;font-weight:bold;">30</div>
<svg style="left:139px;top:176px;" width="794" height="14" viewBox="0 0 794 14"><rect x="4" y="6.1" width="784" height="2.8" fill="#adadad"/><rect x="0" y="1" width="1" height="13" fill="#8c8c8c"/><rect x="791" y="1" width="1" height="13" fill="#8c8c8c"/><path d="M1 7 L8 0.5 L8 13.5 Z" fill="#c4c4c4" stroke="#8a8a8a" stroke-width="0.8"/><path d="M792 7 L785 0.5 L785 13.5 Z" fill="#c4c4c4" stroke="#8a8a8a" stroke-width="0.8"/></svg>
<div style="left:964px;top:163px;width:1px;height:27px;background:#6a6a6a;"></div>
<div style="left:7px;top:190px;width:958px;height:2px;background:#000;"></div>
<div style="left:7px;top:192px;width:941px;height:590px;background:#62657f;"></div>
<div style="left:948px;top:192px;width:17px;height:590px;background:#f0f0f0;"></div>
<div style="left:948px;top:209px;width:17px;height:556px;background:#dadada;border:1px solid #c6c6c6;"></div>
<div style="left:948px;top:192px;width:17px;height:17px;background:#fff;border:1px solid #d2d2d2;"></div>
<svg style="left:948px;top:192px;" width="17" height="17" viewBox="0 0 17 17"><path d="M5 11.5 L8.5 8 L12 11.5" fill="none" stroke="#555" stroke-width="1.4"/></svg>
<div style="left:948px;top:765px;width:17px;height:17px;background:#fff;border:1px solid #d2d2d2;"></div>
<svg style="left:948px;top:765px;" width="17" height="17" viewBox="0 0 17 17"><path d="M5 7 L8.5 10.5 L12 7" fill="none" stroke="#555" stroke-width="1.4"/></svg>
<div style="left:953px;top:482px;width:7px;height:1.6px;background:#6a6a6a;"></div>
<div style="left:953px;top:485px;width:7px;height:1.6px;background:#6a6a6a;"></div>
<div style="left:953px;top:488px;width:7px;height:1.6px;background:#6a6a6a;"></div>
<div style="left:11px;top:196px;width:933px;height:296px;background:#000;"></div>
<div style="left:12px;top:197px;width:95px;height:293px;background:#d5e1fb;"></div>
<div style="left:107px;top:197px;width:32px;height:293px;background:#d5e1fb;border-left:1px solid #000;border-top:1px solid #fff;"></div>
<div style="left:138px;top:197px;width:1px;height:293px;background:#6e6e6e;"></div>
<div style="left:139px;top:197px;width:793px;height:143px;background:#e9f0fd;"></div>
<div style="left:932px;top:197px;width:10px;height:143px;background:#d8d8d8;border-left:1px solid #9c9c9c;"></div>
<div style="left:139px;top:347px;width:793px;height:143px;background:#e9f0fd;"></div>
<div style="left:932px;top:347px;width:10px;height:143px;background:#d8d8d8;border-left:1px solid #9c9c9c;"></div>
<div style="left:139px;top:340px;width:803px;height:7px;background:#62657f;border-top:1px solid #000;border-bottom:1px solid #000;"></div>
<div style="left:108px;top:340px;width:30px;height:8px;background:#dbe5fb;border-top:1px solid #9a9a9a;border-bottom:1px solid #fff;"></div>
<div style="left:12px;top:197px;width:18px;height:18px;background:#cbd6ee;border-top:1px solid #eef2fb;border-left:1px solid #eef2fb;border-right:1px solid #9aa3b8;border-bottom:1px solid #9aa3b8;"></div>
<svg style="left:12px;top:197px;" width="18" height="18" viewBox="0 0 18 18"><path d="M6 5.7 L13.5 13.2 M13.5 5.7 L6 13.2" stroke="#000" stroke-width="1.4"/></svg>
<div style="left:31px;top:197px;width:76px;height:18px;background:#cbd6ee;border-top:1px solid #eef2fb;border-left:1px solid #eef2fb;border-right:1px solid #9aa3b8;border-bottom:1px solid #9aa3b8;"></div>
<div style="left:33.5px;top:200.1px;font-size:12px;color:#000;white-space:nowrap;letter-spacing:-0.528px;">snippet</div>
<svg style="left:92px;top:202px;" width="14" height="8" viewBox="0 0 14 8"><path d="M1 1 H13 L7 7.5 Z" fill="#000"/></svg>
<div style="left:12px;top:215px;width:48px;height:18px;background:#cbd6ee;border-top:1px solid #eef2fb;border-left:1px solid #eef2fb;border-right:1px solid #9aa3b8;border-bottom:1px solid #9aa3b8;"></div>
<div style="left:24.75px;top:218.387px;font-size:11.5px;color:#000;white-space:nowrap;letter-spacing:-0.766px;">Mute</div>
<div style="left:60px;top:215px;width:47px;height:18px;background:#cbd6ee;border-top:1px solid #eef2fb;border-left:1px solid #eef2fb;border-right:1px solid #9aa3b8;border-bottom:1px solid #9aa3b8;"></div>
<div style="left:73.25px;top:218.387px;font-size:11.5px;color:#000;white-space:nowrap;letter-spacing:-0.629px;">Solo</div>
<div style="left:23px;top:250px;width:76px;height:2px;background:#a2a2a2;"></div>
<div style="left:24px;top:246px;width:1px;height:4px;background:#eceef4;"></div>
<div style="left:31px;top:248px;width:1px;height:2px;background:#eceef4;"></div>
<div style="left:39px;top:248px;width:1px;height:2px;background:#eceef4;"></div>
<div style="left:46px;top:248px;width:1px;height:2px;background:#eceef4;"></div>
<div style="left:53px;top:248px;width:1px;height:2px;background:#eceef4;"></div>
<div style="left:60px;top:248px;width:1px;height:2px;background:#eceef4;"></div>
<div style="left:68px;top:248px;width:1px;height:2px;background:#eceef4;"></div>
<div style="left:75px;top:248px;width:1px;height:2px;background:#eceef4;"></div>
<div style="left:82px;top:248px;width:1px;height:2px;background:#eceef4;"></div>
<div style="left:90px;top:248px;width:1px;height:2px;background:#eceef4;"></div>
<div style="left:97px;top:246px;width:1px;height:4px;background:#eceef4;"></div>
<div style="left:23px;top:240px;width:5px;height:1px;background:#000;"></div>
<div style="left:91px;top:240px;width:5px;height:1px;background:#000;"></div>
<div style="left:93px;top:238px;width:1px;height:5px;background:#000;"></div>
<svg style="left:54px;top:245px;" width="12" height="12" viewBox="0 0 12 12"><circle cx="6" cy="5.5" r="3.5" fill="#a6a8c6" stroke="#4b5be6" stroke-width="2.9"/></svg>
<div style="left:23px;top:280px;width:76px;height:2px;background:#a2a2a2;"></div>
<div style="left:24px;top:276px;width:1px;height:4px;background:#eceef4;"></div>
<div style="left:31px;top:278px;width:1px;height:2px;background:#eceef4;"></div>
<div style="left:39px;top:278px;width:1px;height:2px;background:#eceef4;"></div>
<div style="left:46px;top:278px;width:1px;height:2px;background:#eceef4;"></div>
<div style="left:53px;top:278px;width:1px;height:2px;background:#eceef4;"></div>
<div style="left:60px;top:278px;width:1px;height:2px;background:#eceef4;"></div>
<div style="left:68px;top:278px;width:1px;height:2px;background:#eceef4;"></div>
<div style="left:75px;top:278px;width:1px;height:2px;background:#eceef4;"></div>
<div style="left:82px;top:278px;width:1px;height:2px;background:#eceef4;"></div>
<div style="left:90px;top:278px;width:1px;height:2px;background:#eceef4;"></div>
<div style="left:97px;top:276px;width:1px;height:4px;background:#eceef4;"></div>
<svg style="left:54px;top:275px;" width="12" height="12" viewBox="0 0 12 12"><circle cx="6" cy="5.5" r="3.5" fill="#a6a8c6" stroke="#4b5be6" stroke-width="2.9"/></svg>
<div style="left:22.5px;top:264.3px;font-size:9.5px;color:#000;white-space:nowrap;font-weight:bold;">L</div>
<div style="left:89px;top:264.3px;font-size:9.5px;color:#000;white-space:nowrap;font-weight:bold;">R</div>
<div style="left:15px;top:294.5px;font-size:11px;color:#000;white-space:nowrap;letter-spacing:-0.123px;">Stereo, 48000Hz</div>
<div style="left:15px;top:306.5px;font-size:11px;color:#000;white-space:nowrap;letter-spacing:-0.030px;">32-bit float</div>
<div style="left:12px;top:472px;width:18px;height:18px;background:#cbd6ee;border-top:1px solid #eef2fb;border-left:1px solid #eef2fb;border-right:1px solid #9aa3b8;border-bottom:1px solid #9aa3b8;"></div>
<svg style="left:12px;top:473px;" width="18" height="17" viewBox="0 0 18 17"><path d="M3.5 12 H14.5 L9 6 Z" fill="#000"/></svg>
<div style="left:30px;top:472px;width:59px;height:18px;background:#cbd6ee;border-top:1px solid #eef2fb;border-left:1px solid #eef2fb;border-right:1px solid #9aa3b8;border-bottom:1px solid #9aa3b8;"></div>
<div style="left:46px;top:474.887px;font-size:11.5px;color:#000;white-space:nowrap;letter-spacing:-0.327px;">Select</div>
<div style="left:115.82px;top:198.8px;font-size:12px;color:#000;white-space:nowrap;font-weight:bold;">1.0</div>
<div style="left:116.52px;top:227.7px;font-size:12px;color:#000;white-space:nowrap;">0.5</div>
<div style="left:115.82px;top:263.4px;font-size:12px;color:#000;white-space:nowrap;font-weight:bold;">0.0</div>
<div style="left:112.524px;top:298.7px;font-size:12px;color:#000;white-space:nowrap;">-0.5</div>
<div style="left:111.824px;top:325.8px;font-size:12px;color:#000;white-space:nowrap;font-weight:bold;">-1.0</div>
<div style="left:135px;top:233px;width:3px;height:1px;background:#000;"></div>
<div style="left:135px;top:304px;width:3px;height:1px;background:#000;"></div>
<div style="left:133px;top:268px;width:5px;height:1px;background:#000;"></div>
<div style="left:115.82px;top:348.8px;font-size:12px;color:#000;white-space:nowrap;font-weight:bold;">1.0</div>
<div style="left:116.52px;top:377.7px;font-size:12px;color:#000;white-space:nowrap;">0.5</div>
<div style="left:115.82px;top:413.4px;font-size:12px;color:#000;white-space:nowrap;font-weight:bold;">0.0</div>
<div style="left:112.524px;top:448.7px;font-size:12px;color:#000;white-space:nowrap;">-0.5</div>
<div style="left:111.824px;top:475.8px;font-size:12px;color:#000;white-space:nowrap;font-weight:bold;">-1.0</div>
<div style="left:135px;top:383px;width:3px;height:1px;background:#000;"></div>
<div style="left:135px;top:454px;width:3px;height:1px;background:#000;"></div>
<div style="left:133px;top:418px;width:5px;height:1px;background:#000;"></div>
<svg style="left:0;top:0;width:0;height:0" width="0" height="0"><defs><g id="wv" shape-rendering="crispEdges"><path d="M0,0.5V0 h1V0 h1V0 h1V0 h1V0 h1V0 h1V0 h1V0 h1V-1 h1V-1 h1V-2 h1V-2 h1V-2 h1V-2 h1V-3 h1V-2 h1V-3 h1V-3 h1V-4 h1V-3 h1V-3 h1V-4 h1V-5 h1V-5 h1V-5 h1V-6 h1V-6 h1V-6 h1V-8 h1V-9 h1V-9 h1V-10 h1V-14 h1V-10 h1V-11 h1V-10 h1V-11 h1V-10 h1V-9 h1V-12 h1V-9 h1V-9 h1V-10 h1V-9 h1V-8 h1V-12 h1V-12 h1V-10 h1V-9 h1V-10 h1V-9 h1V-9 h1V-10 h1V-11 h1V-10 h1V-10 h1V-12 h1V-10 h1V-9 h1V-11 h1V-10 h1V-8 h1V-10 h1V-8 h1V-10 h1V-9 h1V-9 h1V-9 h1V-9 h1V-9 h1V-11 h1V-10 h1V-10 h1V-11 h1V-12 h1V-11 h1V-10 h1V-7 h1V-8 h1V-7 h1V-5 h1V-5 h1V-5 h1V-4 h1V-4 h1V-3 h1V-2 h1V-2 h1V-3 h1V-4 h1V-6 h1V-7 h1V-7 h1V-8 h1V-13 h1V-11 h1V-13 h1V-12 h1V-14 h1V-14 h1V-14 h1V-14 h1V-14 h1V-15 h1V-15 h1V-14 h1V-13 h1V-13 h1V-11 h1V-11 h1V-13 h1V-12 h1V-12 h1V-13 h1V-11 h1V-9 h1V-9 h1V-7 h1V-9 h1V-10 h1V-7 h1V-6 h1V-6 h1V-7 h1V-7 h1V-8 h1V-7 h1V-8 h1V-8 h1V-8 h1V-8 h1V-8 h1V-9 h1V-10 h1V-10 h1V-9 h1V-10 h1V-10 h1V-10 h1V-10 h1V-9 h1V-10 h1V-10 h1V-13 h1V-11 h1V-9 h1V-8 h1V-9 h1V-7 h1V-6 h1V-6 h1V-6 h1V-7 h1V-6 h1V-6 h1V-5 h1V-4 h1V-4 h1V-3 h1V-4 h1V-6 h1V-8 h1V-8 h1V-9 h1V-8 h1V-8 h1V-8 h1V-8 h1V-9 h1V-10 h1V-11 h1V-13 h1V-14 h1V-16 h1V-12 h1V-13 h1V-13 h1V-11 h1V-13 h1V-15 h1V-10 h1V-10 h1V-10 h1V-10 h1V-10 h1V-11 h1V-11 h1V-10 h1V-10 h1V-9 h1V-10 h1V-10 h1V-8 h1V-9 h1V-9 h1V-8 h1V-7 h1V-9 h1V-7 h1V-8 h1V-8 h1V-10 h1V-10 h1V-10 h1V-11 h1V-13 h1V-12 h1V-14 h1V-14 h1V-16 h1V-13 h1V-11 h1V-11 h1V-12 h1V-11 h1V-10 h1V-9 h1V-9 h1V-10 h1V-8 h1V-8 h1V-8 h1V-8 h1V-7 h1V-6 h1V-5 h1V-5 h1V-6 h1V-6 h1V-9 h1V-10 h1V-11 h1V-10 h1V-10 h1V-10 h1V-11 h1V-11 h1V-13 h1V-13 h1V-13 h1V-15 h1V-17 h1V-12 h1V-16 h1V-12 h1V-11 h1V-11 h1V-11 h1V-11 h1V-10 h1V-9 h1V-8 h1V-7 h1V-6 h1V-6 h1V-7 h1V-7 h1V-6 h1V-6 h1V-7 h1V-6 h1V-5 h1V-7 h1V-7 h1V-8 h1V-9 h1V-9 h1V-10 h1V-11 h1V-12 h1V-11 h1V-11 h1V-13 h1V-12 h1V-14 h1V-12 h1V-15 h1V-13 h1V-14 h1V-13 h1V-16 h1V-12 h1V-11 h1V-10 h1V-10 h1V-11 h1V-9 h1V-10 h1V-8 h1V-9 h1V-8 h1V-8 h1V-7 h1V-6 h1V-7 h1V-5 h1V-6 h1V-8 h1V-7 h1V-9 h1V-9 h1V-9 h1V-11 h1V-11 h1V-12 h1V-12 h1V-12 h1V-12 h1V-11 h1V-11 h1V-15 h1V-12 h1V-10 h1V-12 h1V-12 h1V-10 h1V-11 h1V-9 h1V-13 h1V-10 h1V-11 h1V-9 h1V-9 h1V-9 h1V-7 h1V-7 h1V-7 h1V-6 h1V-6 h1V-6 h1V-7 h1V-8 h1V-7 h1V-8 h1V-9 h1V-9 h1V-10 h1V-11 h1V-12 h1V-12 h1V-12 h1V-12 h1V-12 h1V-14 h1V-12 h1V-12 h1V-13 h1V-11 h1V-13 h1V-11 h1V-12 h1V-11 h1V-9 h1V-10 h1V-9 h1V-7 h1V-9 h1V-5 h1V-5 h1V-4 h1V-4 h1V-3 h1V-3 h1V-2 h1V-2 h1V-2 h1V-2 h1V-2 h1V-1 h1V-1 h1V-1 h1V-1 h1V-1 h1V-1 h1V-1 h1V-1 h1V-1 h1V-1 h1V-1 h1V-1 h1V0 h1V0 h1V0 h1V0 h1V0 h1V0 h1V-1 h1V0 h1V0 h1V0 h1V0 h1V0 h1V0 h1V0 h1V-1 h1V0 h1V0 h1V0 h1V0 h1V0 h1V0 h1V0 h1V0 h1V0 h1V0 h1V0 h1V0 h1V0 h1V0 h1V0 h1V0 h1V0 h1V0 h1V0 h1V0 h1V0 h1V0 h1V-1 h1V-2 h1V-3 h1V-4 h1V-7 h1V-7 h1V-9 h1V-9 h1V-9 h1V-12 h1V-8 h1V-9 h1V-10 h1V-10 h1V-12 h1V-9 h1V-8 h1V-10 h1V-9 h1V-9 h1V-9 h1V-9 h1V-9 h1V-9 h1V-8 h1V-10 h1V-10 h1V-8 h1V-9 h1V-10 h1V-9 h1V-9 h1V-8 h1V-9 h1V-8 h1V-7 h1V-7 h1V-8 h1V-6 h1V-7 h1V-6 h1V-6 h1V-7 h1V-8 h1V-9 h1V-9 h1V-10 h1V-9 h1V-13 h1V-10 h1V-10 h1V-13 h1V-9 h1V-9 h1V-10 h1V-10 h1V-10 h1V-9 h1V-9 h1V-9 h1V-10 h1V-10 h1V-10 h1V-10 h1V-10 h1V-10 h1V-11 h1V-10 h1V-10 h1V-9 h1V-11 h1V-11 h1V-11 h1V-10 h1V-9 h1V-10 h1V-9 h1V-9 h1V-10 h1V-10 h1V-9 h1V-10 h1V-11 h1V-11 h1V-13 h1V-11 h1V-11 h1V-11 h1V-9 h1V-10 h1V-11 h1V-9 h1V-10 h1V-10 h1V-9 h1V-11 h1V-10 h1V-9 h1V-10 h1V-9 h1V-10 h1V-10 h1V-9 h1V-10 h1V-9 h1V-9 h1V-10 h1V-10 h1V-9 h1V-10 h1V-9 h1V-8 h1V-9 h1V-9 h1V-9 h1V-10 h1V-10 h1V-10 h1V-10 h1V-9 h1V-8 h1V-9 h1V-10 h1V-9 h1V-10 h1V-8 h1V-9 h1V-7 h1V-6 h1V-6 h1V-6 h1V-5 h1V-5 h1V-6 h1V-6 h1V-8 h1V-7 h1V-9 h1V-9 h1V-10 h1V-10 h1V-13 h1V-14 h1V-13 h1V-12 h1V-13 h1V-13 h1V-12 h1V-14 h1V-12 h1V-11 h1V-11 h1V-11 h1V-10 h1V-10 h1V-11 h1V-10 h1V-10 h1V-10 h1V-12 h1V-12 h1V-12 h1V-17 h1V-14 h1V-12 h1V-11 h1V-11 h1V-10 h1V-10 h1V-11 h1V-11 h1V-11 h1V-11 h1V-10 h1V-11 h1V-10 h1V-9 h1V-10 h1V-8 h1V-9 h1V-9 h1V-10 h1V-7 h1V-7 h1V-8 h1V-7 h1V-7 h1V-8 h1V-8 h1V-8 h1V-9 h1V-9 h1V-10 h1V-9 h1V-10 h1V-10 h1V-13 h1V-11 h1V-10 h1V-10 h1V-9 h1V-9 h1V-10 h1V-10 h1V-9 h1V-10 h1V-9 h1V-10 h1V-11 h1V-11 h1V-10 h1V-11 h1V-11 h1V-10 h1V-11 h1V-11 h1V-10 h1V-10 h1V-10 h1V-11 h1V-11 h1V-10 h1V-10 h1V-10 h1V-10 h1V-11 h1V-9 h1V-10 h1V-9 h1V-9 h1V-9 h1V-9 h1V-11 h1V-13 h1V-10 h1V-10 h1V-10 h1V-11 h1V-10 h1V-9 h1V-11 h1V-10 h1V-11 h1V-12 h1V-10 h1V-11 h1V-11 h1V-12 h1V-11 h1V-10 h1V-12 h1V-11 h1V-12 h1V-10 h1V-10 h1V-10 h1V-12 h1V-10 h1V-11 h1V-11 h1V-10 h1V-10 h1V-11 h1V-11 h1V-12 h1V-12 h1V-11 h1V-12 h1V-11 h1V-10 h1V-10 h1V-10 h1V-10 h1V-11 h1V-10 h1V-12 h1V-11 h1V-11 h1V-11 h1V-11 h1V-12 h1V-11 h1V-11 h1V-13 h1V-12 h1V-12 h1V-13 h1V-13 h1V-12 h1V-13 h1V-12 h1V-12 h1V-13 h1V-12 h1V-12 h1V-14 h1V-13 h1V-14 h1V-14 h1V-14 h1V-12 h1V-15 h1V-14 h1V-12 h1V-13 h1V-14 h1V-12 h1V-14 h1V-14 h1V-14 h1V-12 h1V-13 h1V-12 h1V-13 h1V-13 h1V-14 h1V-13 h1V-14 h1V-13 h1V-14 h1V-11 h1V-12 h1V-12 h1V-10 h1V-11 h1V-11 h1V-10 h1V-12 h1V-11 h1V-10 h1V-9 h1V-8 h1V-6 h1V-5 h1V-5 h1V-4 h1V-4 h1V-3 h1V-3 h1V-2 h1V-2 h1V-2 h1V-3 h1V-3 h1V-3 h1V-2 h1V-2 h1V-2 h1V-2 h1V-2 h1V-3 h1V-4 h1V-3 h1V-2 h1V-2 h1V-1 h1V-1 h1V-1 h1V-1 h1V-32 h1V-45 h1V-56 h1V-61 h1V-58 h1V-50 h1V-33 h1V-22 h1V-15 h1V-10 h1V-7 h1V-5 h1V-4 h1V-3 h1V-3 h1V-2 h1V-2 h1V0.5V3 h-1V3 h-1V4 h-1V4 h-1V5 h-1V6 h-1V8 h-1V11 h-1V16 h-1V25 h-1V37 h-1V51 h-1V71 h-1V74 h-1V63 h-1V51 h-1V36 h-1V2 h-1V2 h-1V2 h-1V2 h-1V3 h-1V3 h-1V4 h-1V5 h-1V4 h-1V3 h-1V3 h-1V3 h-1V3 h-1V3 h-1V4 h-1V4 h-1V4 h-1V4 h-1V3 h-1V3 h-1V4 h-1V4 h-1V5 h-1V6 h-1V6 h-1V7 h-1V7 h-1V8 h-1V10 h-1V10 h-1V12 h-1V10 h-1V12 h-1V11 h-1V14 h-1V16 h-1V13 h-1V12 h-1V13 h-1V13 h-1V14 h-1V13 h-1V13 h-1V18 h-1V14 h-1V15 h-1V13 h-1V14 h-1V16 h-1V13 h-1V16 h-1V15 h-1V15 h-1V14 h-1V14 h-1V14 h-1V13 h-1V14 h-1V15 h-1V13 h-1V16 h-1V14 h-1V15 h-1V14 h-1V16 h-1V13 h-1V14 h-1V15 h-1V13 h-1V13 h-1V14 h-1V12 h-1V15 h-1V13 h-1V12 h-1V12 h-1V13 h-1V13 h-1V13 h-1V15 h-1V15 h-1V11 h-1V12 h-1V12 h-1V11 h-1V12 h-1V11 h-1V13 h-1V12 h-1V13 h-1V11 h-1V12 h-1V15 h-1V12 h-1V12 h-1V15 h-1V11 h-1V11 h-1V11 h-1V12 h-1V13 h-1V12 h-1V12 h-1V11 h-1V11 h-1V12 h-1V12 h-1V13 h-1V11 h-1V12 h-1V13 h-1V12 h-1V13 h-1V11 h-1V13 h-1V12 h-1V12 h-1V14 h-1V12 h-1V11 h-1V11 h-1V14 h-1V10 h-1V10 h-1V11 h-1V10 h-1V12 h-1V11 h-1V10 h-1V11 h-1V12 h-1V10 h-1V11 h-1V10 h-1V10 h-1V10 h-1V10 h-1V12 h-1V11 h-1V11 h-1V12 h-1V10 h-1V11 h-1V11 h-1V11 h-1V11 h-1V12 h-1V11 h-1V13 h-1V11 h-1V12 h-1V11 h-1V12 h-1V11 h-1V10 h-1V11 h-1V13 h-1V10 h-1V10 h-1V12 h-1V11 h-1V11 h-1V11 h-1V10 h-1V11 h-1V10 h-1V10 h-1V10 h-1V10 h-1V9 h-1V9 h-1V9 h-1V8 h-1V9 h-1V8 h-1V9 h-1V8 h-1V9 h-1V10 h-1V9 h-1V10 h-1V11 h-1V11 h-1V11 h-1V12 h-1V12 h-1V10 h-1V12 h-1V12 h-1V13 h-1V12 h-1V12 h-1V12 h-1V12 h-1V15 h-1V13 h-1V14 h-1V13 h-1V13 h-1V13 h-1V12 h-1V11 h-1V10 h-1V11 h-1V12 h-1V11 h-1V12 h-1V11 h-1V15 h-1V13 h-1V12 h-1V12 h-1V14 h-1V14 h-1V15 h-1V13 h-1V14 h-1V14 h-1V12 h-1V10 h-1V10 h-1V9 h-1V8 h-1V7 h-1V6 h-1V6 h-1V8 h-1V7 h-1V7 h-1V8 h-1V8 h-1V8 h-1V9 h-1V9 h-1V10 h-1V10 h-1V10 h-1V9 h-1V9 h-1V11 h-1V10 h-1V10 h-1V13 h-1V13 h-1V10 h-1V11 h-1V10 h-1V11 h-1V11 h-1V10 h-1V10 h-1V11 h-1V10 h-1V10 h-1V11 h-1V11 h-1V11 h-1V10 h-1V10 h-1V10 h-1V10 h-1V10 h-1V11 h-1V12 h-1V10 h-1V10 h-1V12 h-1V12 h-1V10 h-1V12 h-1V10 h-1V13 h-1V11 h-1V11 h-1V10 h-1V10 h-1V11 h-1V11 h-1V11 h-1V11 h-1V12 h-1V12 h-1V11 h-1V11 h-1V11 h-1V10 h-1V12 h-1V12 h-1V12 h-1V10 h-1V12 h-1V12 h-1V12 h-1V12 h-1V10 h-1V12 h-1V11 h-1V11 h-1V10 h-1V11 h-1V11 h-1V13 h-1V11 h-1V12 h-1V10 h-1V10 h-1V12 h-1V10 h-1V10 h-1V12 h-1V11 h-1V10 h-1V12 h-1V10 h-1V10 h-1V9 h-1V9 h-1V7 h-1V7 h-1V8 h-1V7 h-1V8 h-1V9 h-1V8 h-1V10 h-1V9 h-1V10 h-1V10 h-1V11 h-1V9 h-1V11 h-1V11 h-1V9 h-1V11 h-1V11 h-1V10 h-1V9 h-1V10 h-1V10 h-1V11 h-1V10 h-1V10 h-1V10 h-1V9 h-1V9 h-1V10 h-1V11 h-1V10 h-1V9 h-1V9 h-1V9 h-1V9 h-1V10 h-1V10 h-1V7 h-1V5 h-1V3 h-1V3 h-1V2 h-1V1 h-1V1 h-1V1 h-1V1 h-1V1 h-1V1 h-1V1 h-1V1 h-1V1 h-1V1 h-1V1 h-1V1 h-1V1 h-1V1 h-1V1 h-1V1 h-1V1 h-1V1 h-1V1 h-1V1 h-1V1 h-1V1 h-1V2 h-1V1 h-1V1 h-1V1 h-1V1 h-1V1 h-1V1 h-1V1 h-1V2 h-1V1 h-1V1 h-1V1 h-1V1 h-1V1 h-1V1 h-1V2 h-1V2 h-1V2 h-1V2 h-1V2 h-1V2 h-1V2 h-1V2 h-1V2 h-1V2 h-1V2 h-1V2 h-1V3 h-1V3 h-1V3 h-1V3 h-1V4 h-1V4 h-1V5 h-1V5 h-1V6 h-1V6 h-1V7 h-1V9 h-1V9 h-1V10 h-1V10 h-1V11 h-1V11 h-1V12 h-1V12 h-1V13 h-1V13 h-1V13 h-1V12 h-1V14 h-1V14 h-1V15 h-1V13 h-1V13 h-1V14 h-1V12 h-1V12 h-1V12 h-1V10 h-1V10 h-1V10 h-1V9 h-1V10 h-1V8 h-1V8 h-1V7 h-1V8 h-1V8 h-1V9 h-1V9 h-1V9 h-1V11 h-1V11 h-1V11 h-1V12 h-1V11 h-1V10 h-1V12 h-1V11 h-1V13 h-1V13 h-1V12 h-1V13 h-1V11 h-1V11 h-1V13 h-1V13 h-1V14 h-1V13 h-1V11 h-1V12 h-1V10 h-1V11 h-1V10 h-1V10 h-1V8 h-1V8 h-1V8 h-1V7 h-1V7 h-1V8 h-1V9 h-1V8 h-1V10 h-1V10 h-1V11 h-1V11 h-1V10 h-1V11 h-1V12 h-1V12 h-1V16 h-1V13 h-1V12 h-1V15 h-1V13 h-1V15 h-1V14 h-1V16 h-1V15 h-1V14 h-1V15 h-1V12 h-1V12 h-1V11 h-1V10 h-1V11 h-1V11 h-1V10 h-1V8 h-1V7 h-1V7 h-1V7 h-1V7 h-1V8 h-1V7 h-1V8 h-1V7 h-1V7 h-1V10 h-1V8 h-1V8 h-1V10 h-1V9 h-1V10 h-1V12 h-1V12 h-1V13 h-1V12 h-1V14 h-1V12 h-1V14 h-1V13 h-1V16 h-1V15 h-1V14 h-1V13 h-1V12 h-1V12 h-1V12 h-1V12 h-1V11 h-1V10 h-1V10 h-1V9 h-1V8 h-1V7 h-1V6 h-1V7 h-1V8 h-1V7 h-1V8 h-1V9 h-1V9 h-1V10 h-1V11 h-1V11 h-1V11 h-1V11 h-1V12 h-1V11 h-1V12 h-1V13 h-1V16 h-1V13 h-1V14 h-1V16 h-1V14 h-1V15 h-1V16 h-1V12 h-1V12 h-1V10 h-1V9 h-1V9 h-1V11 h-1V10 h-1V9 h-1V10 h-1V10 h-1V9 h-1V10 h-1V10 h-1V11 h-1V10 h-1V13 h-1V11 h-1V13 h-1V11 h-1V11 h-1V14 h-1V11 h-1V11 h-1V13 h-1V12 h-1V13 h-1V12 h-1V14 h-1V12 h-1V15 h-1V19 h-1V15 h-1V15 h-1V12 h-1V12 h-1V11 h-1V8 h-1V9 h-1V9 h-1V9 h-1V10 h-1V9 h-1V7 h-1V7 h-1V5 h-1V4 h-1V5 h-1V5 h-1V7 h-1V7 h-1V7 h-1V8 h-1V8 h-1V7 h-1V8 h-1V11 h-1V9 h-1V10 h-1V11 h-1V12 h-1V12 h-1V10 h-1V10 h-1V10 h-1V13 h-1V10 h-1V11 h-1V12 h-1V10 h-1V9 h-1V11 h-1V12 h-1V10 h-1V8 h-1V10 h-1V9 h-1V9 h-1V9 h-1V8 h-1V9 h-1V8 h-1V7 h-1V8 h-1V8 h-1V8 h-1V9 h-1V9 h-1V10 h-1V12 h-1V13 h-1V13 h-1V15 h-1V13 h-1V13 h-1V13 h-1V12 h-1V17 h-1V14 h-1V15 h-1V16 h-1V16 h-1V18 h-1V18 h-1V15 h-1V17 h-1V16 h-1V15 h-1V14 h-1V12 h-1V11 h-1V12 h-1V9 h-1V8 h-1V7 h-1V6 h-1V4 h-1V3 h-1V3 h-1V4 h-1V5 h-1V5 h-1V5 h-1V6 h-1V6 h-1V8 h-1V8 h-1V9 h-1V10 h-1V13 h-1V14 h-1V13 h-1V11 h-1V12 h-1V11 h-1V13 h-1V11 h-1V10 h-1V11 h-1V11 h-1V10 h-1V10 h-1V10 h-1V9 h-1V10 h-1V11 h-1V11 h-1V14 h-1V13 h-1V11 h-1V12 h-1V12 h-1V10 h-1V12 h-1V10 h-1V11 h-1V10 h-1V10 h-1V10 h-1V9 h-1V9 h-1V10 h-1V11 h-1V10 h-1V10 h-1V10 h-1V10 h-1V12 h-1V12 h-1V12 h-1V12 h-1V11 h-1V12 h-1V12 h-1V11 h-1V9 h-1V8 h-1V8 h-1V8 h-1V7 h-1V7 h-1V6 h-1V5 h-1V5 h-1V5 h-1V4 h-1V4 h-1V4 h-1V4 h-1V4 h-1V3 h-1V3 h-1V3 h-1V3 h-1V3 h-1V2 h-1V2 h-1V1 h-1V1 h-1V1 h-1V1 h-1V1 h-1V1 h-1V1 h-1V1 h-1Z" fill="#3232c8"/><path d="M0,0.5V0.5 h1V0.5 h1V0.5 h1V0.5 h1V0.5 h1V0.5 h1V0.5 h1V0.5 h1V0.5 h1V0.5 h1V-1 h1V-1 h1V-1 h1V-1 h1V-1 h1V-1 h1V-1 h1V-1 h1V-1 h1V-1 h1V-1 h1V-1 h1V-2 h1V-2 h1V-2 h1V-2 h1V-2 h1V-3 h1V-3 h1V-3 h1V-3 h1V-4 h1V-4 h1V-4 h1V-4 h1V-4 h1V-4 h1V-4 h1V-4 h1V-4 h1V-3 h1V-3 h1V-3 h1V-3 h1V-3 h1V-3 h1V-4 h1V-4 h1V-4 h1V-4 h1V-4 h1V-4 h1V-4 h1V-4 h1V-4 h1V-4 h1V-4 h1V-4 h1V-4 h1V-4 h1V-3 h1V-3 h1V-3 h1V-3 h1V-3 h1V-3 h1V-4 h1V-4 h1V-4 h1V-4 h1V-4 h1V-4 h1V-4 h1V-4 h1V-5 h1V-4 h1V-4 h1V-3 h1V-3 h1V-2 h1V-2 h1V-2 h1V-2 h1V-1 h1V-1 h1V-1 h1V-1 h1V-1 h1V-1 h1V-2 h1V-2 h1V-3 h1V-3 h1V-3 h1V-4 h1V-4 h1V-4 h1V-5 h1V-5 h1V-6 h1V-6 h1V-6 h1V-6 h1V-6 h1V-6 h1V-6 h1V-5 h1V-5 h1V-4 h1V-5 h1V-5 h1V-5 h1V-5 h1V-5 h1V-4 h1V-4 h1V-3 h1V-3 h1V-3 h1V-3 h1V-3 h1V-3 h1V-3 h1V-3 h1V-3 h1V-3 h1V-3 h1V-3 h1V-3 h1V-3 h1V-3 h1V-3 h1V-3 h1V-3 h1V-3 h1V-4 h1V-4 h1V-4 h1V-4 h1V-4 h1V-4 h1V-4 h1V-4 h1V-4 h1V-4 h1V-3 h1V-3 h1V-3 h1V-3 h1V-3 h1V-3 h1V-2 h1V-2 h1V-2 h1V-2 h1V-2 h1V-2 h1V-1 h1V-1 h1V-2 h1V-2 h1V-3 h1V-3 h1V-3 h1V-3 h1V-3 h1V-3 h1V-3 h1V-3 h1V-4 h1V-4 h1V-5 h1V-6 h1V-5 h1V-5 h1V-5 h1V-4 h1V-4 h1V-4 h1V-4 h1V-4 h1V-4 h1V-4 h1V-4 h1V-4 h1V-4 h1V-4 h1V-4 h1V-4 h1V-3 h1V-3 h1V-3 h1V-3 h1V-3 h1V-3 h1V-3 h1V-3 h1V-3 h1V-3 h1V-3 h1V-3 h1V-4 h1V-4 h1V-4 h1V-4 h1V-5 h1V-5 h1V-5 h1V-5 h1V-5 h1V-5 h1V-4 h1V-4 h1V-4 h1V-4 h1V-4 h1V-4 h1V-4 h1V-3 h1V-3 h1V-3 h1V-3 h1V-3 h1V-2 h1V-2 h1V-2 h1V-2 h1V-2 h1V-3 h1V-3 h1V-3 h1V-4 h1V-4 h1V-4 h1V-4 h1V-4 h1V-5 h1V-5 h1V-5 h1V-5 h1V-5 h1V-5 h1V-5 h1V-5 h1V-4 h1V-4 h1V-4 h1V-4 h1V-4 h1V-3 h1V-3 h1V-3 h1V-3 h1V-3 h1V-3 h1V-2 h1V-2 h1V-2 h1V-2 h1V-2 h1V-2 h1V-2 h1V-2 h1V-3 h1V-3 h1V-3 h1V-3 h1V-4 h1V-4 h1V-4 h1V-4 h1V-5 h1V-5 h1V-5 h1V-5 h1V-5 h1V-5 h1V-5 h1V-5 h1V-5 h1V-5 h1V-4 h1V-4 h1V-4 h1V-4 h1V-4 h1V-4 h1V-4 h1V-3 h1V-3 h1V-3 h1V-3 h1V-3 h1V-3 h1V-2 h1V-2 h1V-2 h1V-3 h1V-3 h1V-3 h1V-3 h1V-4 h1V-4 h1V-4 h1V-4 h1V-4 h1V-4 h1V-4 h1V-4 h1V-4 h1V-4 h1V-4 h1V-4 h1V-4 h1V-4 h1V-4 h1V-4 h1V-4 h1V-4 h1V-4 h1V-4 h1V-4 h1V-3 h1V-3 h1V-3 h1V-3 h1V-3 h1V-2 h1V-2 h1V-2 h1V-3 h1V-3 h1V-3 h1V-3 h1V-3 h1V-4 h1V-4 h1V-4 h1V-4 h1V-4 h1V-5 h1V-5 h1V-5 h1V-5 h1V-5 h1V-5 h1V-5 h1V-4 h1V-4 h1V-4 h1V-4 h1V-4 h1V-4 h1V-4 h1V-3 h1V-3 h1V-3 h1V-2 h1V-2 h1V-2 h1V-1 h1V-1 h1V-1 h1V-1 h1V-1 h1V-1 h1V-1 h1V-1 h1V0.5 h1V0.5 h1V0.5 h1V0.5 h1V0.5 h1V0.5 h1V0.5 h1V0.5 h1V0.5 h1V0.5 h1V0.5 h1V0.5 h1V0.5 h1V0.5 h1V0.5 h1V0.5 h1V0.5 h1V0.5 h1V0.5 h1V0.5 h1V0.5 h1V0.5 h1V0.5 h1V0.5 h1V0.5 h1V0.5 h1V0.5 h1V0.5 h1V0.5 h1V0.5 h1V0.5 h1V0.5 h1V0.5 h1V0.5 h1V0.5 h1V0.5 h1V0.5 h1V0.5 h1V0.5 h1V0.5 h1V0.5 h1V0.5 h1V0.5 h1V0.5 h1V0.5 h1V0.5 h1V0.5 h1V0.5 h1V0.5 h1V0.5 h1V-1 h1V-1 h1V-2 h1V-2 h1V-3 h1V-3 h1V-3 h1V-3 h1V-3 h1V-3 h1V-3 h1V-3 h1V-3 h1V-3 h1V-3 h1V-3 h1V-3 h1V-3 h1V-3 h1V-3 h1V-3 h1V-3 h1V-3 h1V-3 h1V-3 h1V-3 h1V-3 h1V-3 h1V-4 h1V-3 h1V-3 h1V-3 h1V-3 h1V-3 h1V-3 h1V-3 h1V-3 h1V-2 h1V-2 h1V-2 h1V-2 h1V-3 h1V-3 h1V-3 h1V-3 h1V-4 h1V-4 h1V-4 h1V-4 h1V-4 h1V-4 h1V-4 h1V-4 h1V-4 h1V-4 h1V-4 h1V-4 h1V-4 h1V-4 h1V-4 h1V-4 h1V-4 h1V-4 h1V-4 h1V-4 h1V-4 h1V-4 h1V-4 h1V-4 h1V-4 h1V-4 h1V-4 h1V-4 h1V-4 h1V-4 h1V-4 h1V-4 h1V-4 h1V-4 h1V-4 h1V-4 h1V-4 h1V-4 h1V-4 h1V-4 h1V-4 h1V-4 h1V-4 h1V-4 h1V-4 h1V-4 h1V-4 h1V-4 h1V-4 h1V-4 h1V-4 h1V-4 h1V-4 h1V-4 h1V-4 h1V-4 h1V-4 h1V-4 h1V-4 h1V-4 h1V-4 h1V-4 h1V-4 h1V-4 h1V-4 h1V-4 h1V-4 h1V-4 h1V-4 h1V-3 h1V-3 h1V-3 h1V-3 h1V-3 h1V-3 h1V-3 h1V-3 h1V-3 h1V-3 h1V-3 h1V-3 h1V-3 h1V-3 h1V-2 h1V-2 h1V-2 h1V-2 h1V-2 h1V-2 h1V-2 h1V-3 h1V-3 h1V-3 h1V-4 h1V-4 h1V-4 h1V-5 h1V-5 h1V-5 h1V-4 h1V-4 h1V-4 h1V-4 h1V-4 h1V-4 h1V-4 h1V-4 h1V-4 h1V-4 h1V-4 h1V-4 h1V-4 h1V-4 h1V-4 h1V-4 h1V-5 h1V-5 h1V-5 h1V-5 h1V-4 h1V-4 h1V-4 h1V-4 h1V-4 h1V-4 h1V-4 h1V-4 h1V-4 h1V-4 h1V-4 h1V-4 h1V-3 h1V-3 h1V-3 h1V-3 h1V-3 h1V-3 h1V-3 h1V-3 h1V-3 h1V-3 h1V-3 h1V-3 h1V-3 h1V-3 h1V-3 h1V-3 h1V-3 h1V-3 h1V-4 h1V-4 h1V-4 h1V-4 h1V-4 h1V-4 h1V-4 h1V-4 h1V-4 h1V-4 h1V-4 h1V-4 h1V-4 h1V-4 h1V-4 h1V-4 h1V-4 h1V-4 h1V-4 h1V-4 h1V-4 h1V-4 h1V-4 h1V-4 h1V-4 h1V-4 h1V-4 h1V-4 h1V-4 h1V-4 h1V-4 h1V-4 h1V-4 h1V-4 h1V-4 h1V-4 h1V-4 h1V-4 h1V-4 h1V-4 h1V-4 h1V-4 h1V-4 h1V-4 h1V-4 h1V-4 h1V-4 h1V-4 h1V-4 h1V-4 h1V-4 h1V-4 h1V-4 h1V-4 h1V-4 h1V-4 h1V-4 h1V-4 h1V-4 h1V-4 h1V-4 h1V-4 h1V-4 h1V-4 h1V-4 h1V-4 h1V-4 h1V-4 h1V-4 h1V-4 h1V-4 h1V-4 h1V-4 h1V-4 h1V-4 h1V-4 h1V-4 h1V-4 h1V-4 h1V-4 h1V-4 h1V-4 h1V-4 h1V-4 h1V-4 h1V-4 h1V-4 h1V-4 h1V-4 h1V-4 h1V-5 h1V-5 h1V-5 h1V-5 h1V-5 h1V-5 h1V-5 h1V-5 h1V-5 h1V-5 h1V-5 h1V-5 h1V-5 h1V-5 h1V-5 h1V-5 h1V-5 h1V-5 h1V-5 h1V-5 h1V-5 h1V-5 h1V-5 h1V-5 h1V-5 h1V-5 h1V-5 h1V-5 h1V-5 h1V-5 h1V-5 h1V-5 h1V-5 h1V-5 h1V-5 h1V-5 h1V-5 h1V-4 h1V-4 h1V-4 h1V-4 h1V-4 h1V-4 h1V-4 h1V-4 h1V-3 h1V-3 h1V-2 h1V-2 h1V-2 h1V-2 h1V-1 h1V-1 h1V-1 h1V-1 h1V-1 h1V-1 h1V-1 h1V-1 h1V-1 h1V-1 h1V-1 h1V-1 h1V-1 h1V-1 h1V-1 h1V-1 h1V-1 h1V-1 h1V-1 h1V0.5 h1V0.5 h1V0.5 h1V0.5 h1V-12 h1V-26 h1V-32 h1V-33 h1V-32 h1V-28 h1V-20 h1V-12 h1V-8 h1V-5 h1V-4 h1V-2 h1V-2 h1V-2 h1V-2 h1V-1 h1V-1 h1V0.5V2 h-1V2 h-1V3 h-1V3 h-1V3 h-1V3 h-1V5 h-1V6 h-1V9 h-1V13 h-1V21 h-1V29 h-1V33 h-1V34 h-1V33 h-1V27 h-1V13 h-1V0.5 h-1V0.5 h-1V0.5 h-1V0.5 h-1V2 h-1V2 h-1V2 h-1V2 h-1V2 h-1V2 h-1V2 h-1V2 h-1V2 h-1V2 h-1V2 h-1V2 h-1V2 h-1V2 h-1V2 h-1V2 h-1V2 h-1V2 h-1V2 h-1V3 h-1V3 h-1V3 h-1V3 h-1V4 h-1V4 h-1V5 h-1V5 h-1V5 h-1V5 h-1V5 h-1V5 h-1V5 h-1V5 h-1V6 h-1V6 h-1V6 h-1V6 h-1V6 h-1V6 h-1V6 h-1V6 h-1V6 h-1V6 h-1V6 h-1V6 h-1V6 h-1V6 h-1V6 h-1V6 h-1V6 h-1V6 h-1V6 h-1V6 h-1V6 h-1V6 h-1V6 h-1V6 h-1V6 h-1V6 h-1V6 h-1V6 h-1V6 h-1V6 h-1V6 h-1V6 h-1V6 h-1V6 h-1V6 h-1V6 h-1V6 h-1V5 h-1V5 h-1V5 h-1V5 h-1V5 h-1V5 h-1V5 h-1V5 h-1V5 h-1V5 h-1V5 h-1V5 h-1V5 h-1V5 h-1V5 h-1V5 h-1V5 h-1V5 h-1V5 h-1V5 h-1V5 h-1V5 h-1V5 h-1V5 h-1V5 h-1V5 h-1V5 h-1V5 h-1V5 h-1V5 h-1V5 h-1V5 h-1V5 h-1V5 h-1V5 h-1V5 h-1V5 h-1V5 h-1V5 h-1V5 h-1V5 h-1V5 h-1V5 h-1V5 h-1V5 h-1V5 h-1V5 h-1V5 h-1V5 h-1V5 h-1V5 h-1V5 h-1V5 h-1V5 h-1V5 h-1V5 h-1V5 h-1V5 h-1V5 h-1V5 h-1V5 h-1V5 h-1V5 h-1V5 h-1V5 h-1V5 h-1V5 h-1V5 h-1V5 h-1V5 h-1V5 h-1V5 h-1V5 h-1V5 h-1V5 h-1V5 h-1V5 h-1V5 h-1V5 h-1V5 h-1V5 h-1V5 h-1V5 h-1V5 h-1V5 h-1V5 h-1V5 h-1V5 h-1V5 h-1V5 h-1V4 h-1V4 h-1V4 h-1V4 h-1V4 h-1V4 h-1V4 h-1V4 h-1V4 h-1V4 h-1V4 h-1V4 h-1V4 h-1V4 h-1V4 h-1V4 h-1V4 h-1V4 h-1V5 h-1V5 h-1V5 h-1V5 h-1V5 h-1V5 h-1V5 h-1V5 h-1V5 h-1V5 h-1V5 h-1V5 h-1V6 h-1V6 h-1V6 h-1V6 h-1V5 h-1V5 h-1V5 h-1V5 h-1V5 h-1V5 h-1V5 h-1V5 h-1V5 h-1V5 h-1V5 h-1V5 h-1V5 h-1V5 h-1V5 h-1V5 h-1V6 h-1V6 h-1V6 h-1V5 h-1V5 h-1V5 h-1V4 h-1V4 h-1V4 h-1V3 h-1V3 h-1V3 h-1V3 h-1V3 h-1V3 h-1V3 h-1V4 h-1V4 h-1V4 h-1V4 h-1V4 h-1V4 h-1V4 h-1V4 h-1V4 h-1V4 h-1V4 h-1V4 h-1V4 h-1V4 h-1V5 h-1V5 h-1V5 h-1V5 h-1V5 h-1V5 h-1V5 h-1V5 h-1V5 h-1V5 h-1V5 h-1V5 h-1V5 h-1V5 h-1V5 h-1V5 h-1V5 h-1V5 h-1V5 h-1V5 h-1V5 h-1V5 h-1V5 h-1V5 h-1V5 h-1V5 h-1V5 h-1V5 h-1V5 h-1V5 h-1V5 h-1V5 h-1V5 h-1V5 h-1V5 h-1V5 h-1V5 h-1V5 h-1V5 h-1V5 h-1V5 h-1V5 h-1V5 h-1V5 h-1V5 h-1V5 h-1V5 h-1V5 h-1V5 h-1V5 h-1V5 h-1V5 h-1V5 h-1V5 h-1V5 h-1V5 h-1V5 h-1V5 h-1V5 h-1V5 h-1V5 h-1V5 h-1V5 h-1V5 h-1V5 h-1V5 h-1V5 h-1V5 h-1V5 h-1V4 h-1V4 h-1V4 h-1V4 h-1V3 h-1V3 h-1V3 h-1V3 h-1V4 h-1V4 h-1V4 h-1V4 h-1V4 h-1V4 h-1V4 h-1V4 h-1V5 h-1V4 h-1V4 h-1V4 h-1V4 h-1V4 h-1V4 h-1V4 h-1V4 h-1V4 h-1V4 h-1V4 h-1V4 h-1V4 h-1V4 h-1V4 h-1V4 h-1V4 h-1V4 h-1V4 h-1V4 h-1V4 h-1V4 h-1V4 h-1V4 h-1V3 h-1V3 h-1V2 h-1V2 h-1V0.5 h-1V0.5 h-1V0.5 h-1V0.5 h-1V0.5 h-1V0.5 h-1V0.5 h-1V0.5 h-1V0.5 h-1V0.5 h-1V0.5 h-1V0.5 h-1V0.5 h-1V0.5 h-1V0.5 h-1V0.5 h-1V0.5 h-1V0.5 h-1V0.5 h-1V0.5 h-1V0.5 h-1V0.5 h-1V0.5 h-1V0.5 h-1V0.5 h-1V0.5 h-1V0.5 h-1V0.5 h-1V0.5 h-1V0.5 h-1V0.5 h-1V0.5 h-1V0.5 h-1V0.5 h-1V0.5 h-1V0.5 h-1V0.5 h-1V0.5 h-1V0.5 h-1V0.5 h-1V0.5 h-1V0.5 h-1V0.5 h-1V0.5 h-1V0.5 h-1V0.5 h-1V0.5 h-1V0.5 h-1V0.5 h-1V0.5 h-1V2 h-1V2 h-1V2 h-1V2 h-1V2 h-1V2 h-1V2 h-1V2 h-1V3 h-1V3 h-1V3 h-1V4 h-1V4 h-1V4 h-1V5 h-1V5 h-1V5 h-1V5 h-1V5 h-1V5 h-1V5 h-1V6 h-1V6 h-1V6 h-1V6 h-1V6 h-1V6 h-1V6 h-1V5 h-1V5 h-1V5 h-1V5 h-1V5 h-1V4 h-1V4 h-1V4 h-1V4 h-1V4 h-1V3 h-1V3 h-1V3 h-1V4 h-1V4 h-1V4 h-1V4 h-1V4 h-1V5 h-1V5 h-1V5 h-1V5 h-1V5 h-1V5 h-1V5 h-1V5 h-1V5 h-1V5 h-1V5 h-1V5 h-1V5 h-1V5 h-1V5 h-1V5 h-1V5 h-1V5 h-1V5 h-1V5 h-1V5 h-1V4 h-1V4 h-1V4 h-1V4 h-1V3 h-1V3 h-1V3 h-1V4 h-1V4 h-1V4 h-1V4 h-1V4 h-1V4 h-1V5 h-1V5 h-1V5 h-1V5 h-1V5 h-1V5 h-1V5 h-1V6 h-1V6 h-1V6 h-1V6 h-1V6 h-1V6 h-1V6 h-1V6 h-1V6 h-1V6 h-1V5 h-1V5 h-1V5 h-1V5 h-1V4 h-1V4 h-1V4 h-1V4 h-1V3 h-1V3 h-1V3 h-1V3 h-1V3 h-1V3 h-1V3 h-1V3 h-1V4 h-1V4 h-1V4 h-1V4 h-1V4 h-1V4 h-1V5 h-1V5 h-1V5 h-1V5 h-1V5 h-1V6 h-1V6 h-1V6 h-1V6 h-1V6 h-1V6 h-1V6 h-1V6 h-1V5 h-1V5 h-1V5 h-1V5 h-1V5 h-1V4 h-1V4 h-1V4 h-1V3 h-1V3 h-1V3 h-1V3 h-1V3 h-1V4 h-1V4 h-1V4 h-1V4 h-1V4 h-1V5 h-1V5 h-1V5 h-1V5 h-1V5 h-1V5 h-1V5 h-1V6 h-1V6 h-1V6 h-1V6 h-1V6 h-1V6 h-1V5 h-1V5 h-1V5 h-1V5 h-1V4 h-1V4 h-1V4 h-1V4 h-1V4 h-1V4 h-1V4 h-1V4 h-1V4 h-1V4 h-1V4 h-1V4 h-1V5 h-1V5 h-1V5 h-1V5 h-1V5 h-1V5 h-1V5 h-1V5 h-1V5 h-1V5 h-1V5 h-1V5 h-1V5 h-1V6 h-1V6 h-1V6 h-1V7 h-1V6 h-1V5 h-1V5 h-1V4 h-1V4 h-1V4 h-1V4 h-1V4 h-1V4 h-1V4 h-1V4 h-1V3 h-1V3 h-1V2 h-1V2 h-1V3 h-1V3 h-1V3 h-1V3 h-1V3 h-1V3 h-1V4 h-1V4 h-1V4 h-1V4 h-1V4 h-1V4 h-1V5 h-1V5 h-1V5 h-1V5 h-1V5 h-1V5 h-1V5 h-1V5 h-1V5 h-1V5 h-1V4 h-1V4 h-1V4 h-1V4 h-1V4 h-1V4 h-1V4 h-1V4 h-1V4 h-1V4 h-1V4 h-1V4 h-1V4 h-1V4 h-1V4 h-1V4 h-1V4 h-1V4 h-1V4 h-1V5 h-1V5 h-1V6 h-1V6 h-1V6 h-1V6 h-1V6 h-1V5 h-1V6 h-1V6 h-1V7 h-1V7 h-1V7 h-1V7 h-1V7 h-1V7 h-1V7 h-1V6 h-1V6 h-1V5 h-1V5 h-1V5 h-1V4 h-1V4 h-1V4 h-1V3 h-1V3 h-1V2 h-1V2 h-1V2 h-1V2 h-1V2 h-1V2 h-1V3 h-1V3 h-1V3 h-1V3 h-1V4 h-1V4 h-1V5 h-1V5 h-1V6 h-1V5 h-1V5 h-1V5 h-1V5 h-1V5 h-1V5 h-1V5 h-1V5 h-1V4 h-1V4 h-1V4 h-1V4 h-1V4 h-1V4 h-1V5 h-1V5 h-1V5 h-1V5 h-1V5 h-1V5 h-1V5 h-1V5 h-1V5 h-1V5 h-1V5 h-1V5 h-1V5 h-1V5 h-1V4 h-1V4 h-1V4 h-1V4 h-1V4 h-1V4 h-1V5 h-1V5 h-1V5 h-1V5 h-1V5 h-1V5 h-1V5 h-1V5 h-1V5 h-1V4 h-1V4 h-1V4 h-1V4 h-1V3 h-1V3 h-1V3 h-1V3 h-1V3 h-1V2 h-1V2 h-1V2 h-1V2 h-1V2 h-1V2 h-1V2 h-1V2 h-1V2 h-1V2 h-1V2 h-1V2 h-1V0.5 h-1V0.5 h-1V0.5 h-1V0.5 h-1V0.5 h-1V0.5 h-1V0.5 h-1V0.5 h-1V0.5 h-1V0.5 h-1Z" fill="#6464dc"/></g></defs></svg>
<svg style="left:139px;top:197px;overflow:hidden" width="793" height="143" viewBox="0 -71 793 143"><use href="#wv"/></svg>
<svg style="left:139px;top:347px;overflow:hidden" width="793" height="143" viewBox="0 -71 793 143"><use href="#wv"/></svg>
<div style="left:7px;top:782px;width:958px;height:17px;background:#f0f0f0;"></div>
<div style="left:143px;top:782px;width:17px;height:17px;background:#fff;border:1px solid #d2d2d2;"></div>
<svg style="left:143px;top:782px;" width="17" height="17" viewBox="0 0 17 17"><path d="M10.5 4.5 L6.5 8.5 L10.5 12.5" fill="none" stroke="#555" stroke-width="1.4"/></svg>
<div style="left:160px;top:782px;width:622px;height:17px;background:#dadada;border:1px solid #c6c6c6;"></div>
<div style="left:782px;top:782px;width:149px;height:17px;background:#fff;border-top:1px solid #d2d2d2;border-bottom:1px solid #d2d2d2;"></div>
<div style="left:931px;top:782px;width:17px;height:17px;background:#fff;border:1px solid #d2d2d2;"></div>
<svg style="left:931px;top:782px;" width="17" height="17" viewBox="0 0 17 17"><path d="M6.5 4.5 L10.5 8.5 L6.5 12.5" fill="none" stroke="#555" stroke-width="1.4"/></svg>
<div style="left:467px;top:787px;width:1.5px;height:6px;background:#6a6a6a;"></div>
<div style="left:470px;top:787px;width:1.5px;height:6px;background:#6a6a6a;"></div>
<div style="left:473px;top:787px;width:1.5px;height:6px;background:#6a6a6a;"></div>
<div style="left:8px;top:799px;width:957px;height:1px;background:#bdbdbd;"></div>
<div style="left:8px;top:800px;width:957px;height:56px;background:#f7f8fd;"></div>
<div style="left:8px;top:800px;width:10px;height:55px;background:#f7f8fd;border-right:1px solid #c4c4c4;"></div>
<svg style="left:8px;top:800px;shape-rendering:crispEdges;" width="9" height="55" viewBox="0 0 9 55"><rect x="3" y="5" width="4" height="1" fill="#c2c2c2"/><rect x="3" y="9" width="4" height="1" fill="#c2c2c2"/><rect x="3" y="13" width="4" height="1" fill="#c2c2c2"/><rect x="3" y="17" width="4" height="1" fill="#c2c2c2"/><rect x="3" y="21" width="4" height="1" fill="#c2c2c2"/><rect x="3" y="25" width="4" height="1" fill="#c2c2c2"/><rect x="3" y="29" width="4" height="1" fill="#c2c2c2"/><rect x="3" y="33" width="4" height="1" fill="#c2c2c2"/><rect x="3" y="37" width="4" height="1" fill="#c2c2c2"/><rect x="3" y="41" width="4" height="1" fill="#c2c2c2"/><rect x="3" y="45" width="4" height="1" fill="#c2c2c2"/><rect x="3" y="49" width="4" height="1" fill="#c2c2c2"/></svg>
<div style="left:7px;top:855px;width:958px;height:1px;background:#c4c4c4;"></div>
<div style="left:7px;top:856px;width:958px;height:1px;background:#e4e4e4;"></div>
<div style="left:7px;top:799px;width:1px;height:57px;background:#c4c4c4;"></div>
<div style="left:533px;top:801px;width:2px;height:54px;background:#c4c4c4;"></div>
<div style="left:535px;top:800px;width:10px;height:55px;background:#f7f8fd;border-right:1px solid #c4c4c4;"></div>
<svg style="left:535px;top:800px;shape-rendering:crispEdges;" width="9" height="55" viewBox="0 0 9 55"><rect x="3" y="5" width="4" height="1" fill="#c2c2c2"/><rect x="3" y="9" width="4" height="1" fill="#c2c2c2"/><rect x="3" y="13" width="4" height="1" fill="#c2c2c2"/><rect x="3" y="17" width="4" height="1" fill="#c2c2c2"/><rect x="3" y="21" width="4" height="1" fill="#c2c2c2"/><rect x="3" y="25" width="4" height="1" fill="#c2c2c2"/><rect x="3" y="29" width="4" height="1" fill="#c2c2c2"/><rect x="3" y="33" width="4" height="1" fill="#c2c2c2"/><rect x="3" y="37" width="4" height="1" fill="#c2c2c2"/><rect x="3" y="41" width="4" height="1" fill="#c2c2c2"/><rect x="3" y="45" width="4" height="1" fill="#c2c2c2"/><rect x="3" y="49" width="4" height="1" fill="#c2c2c2"/></svg>
<div style="left:865px;top:801px;width:1px;height:54px;background:#c4c4c4;"></div>
<div style="left:868px;top:801px;width:1px;height:54px;background:#c4c4c4;"></div>
<div style="left:24px;top:806.7px;font-size:13px;color:#000;white-space:nowrap;letter-spacing:-0.452px;">Project Rate (Hz)</div>
<div style="left:129px;top:806.7px;font-size:13px;color:#000;white-space:nowrap;letter-spacing:-0.202px;">Snap-To</div>
<div style="left:122px;top:805px;width:1px;height:16px;background:#9a9a9a;"></div>
<div style="left:122px;top:834px;width:1px;height:15px;background:#9a9a9a;"></div>
<div style="left:204px;top:805px;width:1px;height:16px;background:#9a9a9a;"></div>
<div style="left:204px;top:834px;width:1px;height:15px;background:#9a9a9a;"></div>
<div style="left:24px;top:828px;width:92px;height:23px;background:#fff;border:1px solid #555;"></div>
<div style="left:30px;top:833.4px;font-size:12px;color:#000;white-space:nowrap;letter-spacing:-0.473px;">48000</div>
<svg style="left:102px;top:836.5px;" width="9" height="6" viewBox="0 0 9 6"><path d="M1.8 0.8 L5 4.4 L8.2 0.8" fill="none" stroke="#404040" stroke-width="1.8"/></svg>
<div style="left:129px;top:828px;width:68px;height:23px;background:#fff;border:1px solid #555;"></div>
<div style="left:134px;top:833.112px;font-size:12.5px;color:#000;white-space:nowrap;letter-spacing:0.186px;">Off</div>
<svg style="left:183px;top:836.5px;" width="9" height="6" viewBox="0 0 9 6"><path d="M1.8 0.8 L5 4.4 L8.2 0.8" fill="none" stroke="#404040" stroke-width="1.8"/></svg>
<div style="left:210px;top:801px;width:318px;height:22px;background:#fff;border:1px solid #555;"></div>
<div style="left:214px;top:805.612px;font-size:12.5px;color:#000;white-space:nowrap;letter-spacing:-0.352px;">Start and Length of Selection</div>
<svg style="left:514px;top:809px;" width="9" height="6" viewBox="0 0 9 6"><path d="M1.8 0.8 L5 4.4 L8.2 0.8" fill="none" stroke="#404040" stroke-width="1.8"/></svg>
<div style="left:210px;top:828px;width:156px;height:22px;background:#cacaca;border-top:2px solid #7c7c7c;border-left:2px solid #7c7c7c;border-bottom:1px solid #ececec;border-right:1px solid #ececec;"></div>
<div style="left:235px;top:830px;width:13px;height:19px;background:#b1b5c6;"></div>
<div style="left:270px;top:830px;width:17px;height:19px;background:#b1b5c6;"></div>
<div style="left:345px;top:830px;width:12px;height:19px;background:#b1b5c6;"></div>
<div style="left:357px;top:830px;width:1px;height:19px;background:#f4f4f4;"></div>
<div style="left:358px;top:830px;width:7px;height:19px;background:#b1b5c6;"></div>
<div style="left:214.719px;top:831.6px;font-size:13.6px;color:#2222b6;white-space:nowrap;transform:scaleX(0.9);transform-origin:50% 50%;">0</div>
<div style="left:225.719px;top:831.6px;font-size:13.6px;color:#2222b6;white-space:nowrap;transform:scaleX(0.9);transform-origin:50% 50%;">0</div>
<div style="left:237.469px;top:831.6px;font-size:13.6px;color:#2222b6;white-space:nowrap;transform:scaleX(0.9);transform-origin:50% 50%;">h</div>
<div style="left:249.969px;top:831.6px;font-size:13.6px;color:#2222b6;white-space:nowrap;transform:scaleX(0.9);transform-origin:50% 50%;">0</div>
<div style="left:260.719px;top:831.6px;font-size:13.6px;color:#2222b6;white-space:nowrap;transform:scaleX(0.9);transform-origin:50% 50%;">0</div>
<div style="left:272.836px;top:831.6px;font-size:13.6px;color:#2222b6;white-space:nowrap;transform:scaleX(0.9);transform-origin:50% 50%;">m</div>
<div style="left:288.719px;top:831.6px;font-size:13.6px;color:#2222b6;white-space:nowrap;transform:scaleX(0.9);transform-origin:50% 50%;">0</div>
<div style="left:299.719px;top:831.6px;font-size:13.6px;color:#2222b6;white-space:nowrap;transform:scaleX(0.9);transform-origin:50% 50%;">0</div>
<div style="left:309.111px;top:831.6px;font-size:13.6px;color:#2222b6;white-space:nowrap;transform:scaleX(0.9);transform-origin:50% 50%;">.</div>
<div style="left:313.719px;top:831.6px;font-size:13.6px;color:#2222b6;white-space:nowrap;transform:scaleX(0.9);transform-origin:50% 50%;">0</div>
<div style="left:324.719px;top:831.6px;font-size:13.6px;color:#2222b6;white-space:nowrap;transform:scaleX(0.9);transform-origin:50% 50%;">0</div>
<div style="left:335.719px;top:831.6px;font-size:13.6px;color:#2222b6;white-space:nowrap;transform:scaleX(0.9);transform-origin:50% 50%;">0</div>
<div style="left:347.85px;top:831.6px;font-size:13.6px;color:#2222b6;white-space:nowrap;transform:scaleX(0.9);transform-origin:50% 50%;">s</div>
<svg style="left:357.5px;top:836px;" width="8" height="6" viewBox="0 0 8 6"><path d="M0.5 1 H7.5 L4 5 Z" fill="#000"/></svg>
<div style="left:372px;top:828px;width:156px;height:22px;background:#cacaca;border-top:2px solid #7c7c7c;border-left:2px solid #7c7c7c;border-bottom:1px solid #ececec;border-right:1px solid #ececec;"></div>
<div style="left:397px;top:830px;width:13px;height:19px;background:#b1b5c6;"></div>
<div style="left:432px;top:830px;width:17px;height:19px;background:#b1b5c6;"></div>
<div style="left:507px;top:830px;width:12px;height:19px;background:#b1b5c6;"></div>
<div style="left:519px;top:830px;width:1px;height:19px;background:#f4f4f4;"></div>
<div style="left:520px;top:830px;width:7px;height:19px;background:#b1b5c6;"></div>
<div style="left:376.719px;top:831.6px;font-size:13.6px;color:#2222b6;white-space:nowrap;transform:scaleX(0.9);transform-origin:50% 50%;">0</div>
<div style="left:387.719px;top:831.6px;font-size:13.6px;color:#2222b6;white-space:nowrap;transform:scaleX(0.9);transform-origin:50% 50%;">0</div>
<div style="left:399.469px;top:831.6px;font-size:13.6px;color:#2222b6;white-space:nowrap;transform:scaleX(0.9);transform-origin:50% 50%;">h</div>
<div style="left:411.969px;top:831.6px;font-size:13.6px;color:#2222b6;white-space:nowrap;transform:scaleX(0.9);transform-origin:50% 50%;">0</div>
<div style="left:422.719px;top:831.6px;font-size:13.6px;color:#2222b6;white-space:nowrap;transform:scaleX(0.9);transform-origin:50% 50%;">0</div>
<div style="left:434.836px;top:831.6px;font-size:13.6px;color:#2222b6;white-space:nowrap;transform:scaleX(0.9);transform-origin:50% 50%;">m</div>
<div style="left:450.719px;top:831.6px;font-size:13.6px;color:#2222b6;white-space:nowrap;transform:scaleX(0.9);transform-origin:50% 50%;">3</div>
<div style="left:461.719px;top:831.6px;font-size:13.6px;color:#2222b6;white-space:nowrap;transform:scaleX(0.9);transform-origin:50% 50%;">1</div>
<div style="left:471.111px;top:831.6px;font-size:13.6px;color:#2222b6;white-space:nowrap;transform:scaleX(0.9);transform-origin:50% 50%;">.</div>
<div style="left:475.719px;top:831.6px;font-size:13.6px;color:#2222b6;white-space:nowrap;transform:scaleX(0.9);transform-origin:50% 50%;">4</div>
<div style="left:486.719px;top:831.6px;font-size:13.6px;color:#2222b6;white-space:nowrap;transform:scaleX(0.9);transform-origin:50% 50%;">1</div>
<div style="left:497.719px;top:831.6px;font-size:13.6px;color:#2222b6;white-space:nowrap;transform:scaleX(0.9);transform-origin:50% 50%;">2</div>
<div style="left:509.85px;top:831.6px;font-size:13.6px;color:#2222b6;white-space:nowrap;transform:scaleX(0.9);transform-origin:50% 50%;">s</div>
<svg style="left:519.5px;top:836px;" width="8" height="6" viewBox="0 0 8 6"><path d="M0.5 1 H7.5 L4 5 Z" fill="#000"/></svg>
<div style="left:546px;top:801px;width:317px;height:53px;background:#cacaca;border-top:2px solid #7c7c7c;border-left:2px solid #7c7c7c;border-bottom:1px solid #e8e8e8;border-right:1px solid #e8e8e8;"></div>
<div style="left:607px;top:803px;width:43px;height:50px;background:#b1b5c6;"></div>
<div style="left:708px;top:803px;width:56px;height:50px;background:#b1b5c6;"></div>
<div style="left:822px;top:803px;width:31px;height:50px;background:#b1b5c6;"></div>
<div style="left:854px;top:803px;width:8px;height:50px;background:#b1b5c6;"></div>
<div style="left:853px;top:803px;width:1px;height:50px;background:#f8f8f8;"></div>
<div style="left:853px;top:803px;width:9px;height:1px;background:#f8f8f8;"></div>
<div style="left:552.322px;top:804.5px;font-size:42px;color:#0c0cae;white-space:nowrap;">0</div>
<div style="left:581.322px;top:804.5px;font-size:42px;color:#0c0cae;white-space:nowrap;">0</div>
<div style="left:617.322px;top:804.5px;font-size:42px;color:#0c0cae;white-space:nowrap;">h</div>
<div style="left:654.322px;top:804.5px;font-size:42px;color:#0c0cae;white-space:nowrap;">0</div>
<div style="left:683.322px;top:804.5px;font-size:42px;color:#0c0cae;white-space:nowrap;">0</div>
<div style="left:717.508px;top:804.5px;font-size:42px;color:#0c0cae;white-space:nowrap;">m</div>
<div style="left:767.322px;top:804.5px;font-size:42px;color:#0c0cae;white-space:nowrap;">0</div>
<div style="left:796.322px;top:804.5px;font-size:42px;color:#0c0cae;white-space:nowrap;">0</div>
<div style="left:832.5px;top:804.5px;font-size:42px;color:#0c0cae;white-space:nowrap;">s</div>
<svg style="left:854px;top:824.5px;" width="8" height="6" viewBox="0 0 8 6"><path d="M0 0.5 H7.5 L3.75 4.5 Z" fill="#000"/></svg>
<div style="left:7px;top:857px;width:958px;height:22px;background:#fff;border:1px solid #a6a6a6;"></div>
<div style="left:16px;top:858px;width:1px;height:20px;background:#c8c8c8;"></div>
<div style="left:187px;top:858px;width:1px;height:20px;background:#c8c8c8;"></div>
<div style="left:786px;top:858px;width:1px;height:20px;background:#c8c8c8;"></div>
<div style="left:21px;top:862.5px;font-size:12.5px;color:#000;white-space:nowrap;letter-spacing:-0.380px;">Stopped.</div>
<svg style="left:953px;top:867px;" width="10" height="10" viewBox="0 0 10 10"><path d="M8 2h1v1h-1z M8 5h1v1h-1z M5 5h1v1h-1z M8 8h1v1h-1z M5 8h1v1h-1z M2 8h1v1h-1z" fill="#b8b8b8"/></svg>
<div style="left:290px;top:514px;width:440px;height:224px;background:#d0e3ee;border:1px solid #2a2a2e;"></div>
<div style="left:298px;top:545px;width:425px;height:185px;background:#f0f0f0;border-top:1px solid #a4b8c6;"></div>
<div style="left:298px;top:730px;width:425px;height:1px;background:#a9c4d8;"></div>
<div style="left:306px;top:522.5px;font-size:12.5px;color:#000;white-space:nowrap;letter-spacing:0.146px;">Amplify</div>
<div style="left:583px;top:515px;width:48px;height:30px;background:#d0e3ee;border-left:1px solid #000;border-bottom:1px solid #000;"></div>
<div style="left:630px;top:515px;width:47px;height:30px;background:#d0e3ee;border-left:1px solid #000;border-bottom:1px solid #000;"></div>
<div style="left:676px;top:515px;width:47px;height:30px;background:#c65850;border-left:1px solid #5a3030;border-bottom:1px solid #000;border-right:1px solid #000;"></div>
<div style="left:602px;top:530px;width:10px;height:3px;background:#000;"></div>
<div style="left:649px;top:525px;width:11px;height:9px;border:2px solid #000;"></div>
<svg style="left:695px;top:525px;" width="10" height="9" viewBox="0 0 10 9"><path d="M1 0.5 L9 8.5 M9 0.5 L1 8.5" stroke="#000" stroke-width="2.3" fill="none"/></svg>
<div style="left:419px;top:558.5px;font-size:12.5px;color:#000;white-space:nowrap;letter-spacing:-0.075px;"><span style="text-decoration:underline">A</span>mplification (dB):</div>
<div style="left:529px;top:555px;width:72px;height:23px;background:#fff;border:1px solid #7a7a7a;"></div>
<div style="left:536px;top:559.312px;font-size:12.5px;color:#000;white-space:nowrap;letter-spacing:-0.634px;">-0.0</div>
<div style="left:311px;top:598px;width:398px;height:4px;background:#e7eaea;border:1px solid #b9b9b9;"></div>
<svg style="left:504px;top:590px;" width="13" height="20" viewBox="0 0 13 20"><path d="M1.5 1.5 H11.5 V13 L6.5 18.5 L1.5 13 Z" fill="#dddddd" stroke="#6f6f6f" stroke-width="1"/></svg>
<div style="left:399px;top:623.5px;font-size:12.5px;color:#000;white-space:nowrap;letter-spacing:-0.287px;"><span style="text-decoration:underline">N</span>ew Peak Amplitude (dB):</div>
<div style="left:548px;top:620px;width:72px;height:23px;background:#fff;border:1px solid #7a7a7a;"></div>
<div style="left:555px;top:624.312px;font-size:12.5px;color:#000;white-space:nowrap;letter-spacing:-0.792px;">0.0</div>
<div style="left:461px;top:657px;width:13px;height:13px;background:#fff;border:1px solid #4a4a4a;"></div>
<svg style="left:461px;top:657px;" width="13" height="13" viewBox="0 0 13 13"><path d="M2.8 6.3 L5.3 9.2 L10.3 3.3" fill="none" stroke="#000" stroke-width="2.3"/></svg>
<div style="left:478px;top:656.5px;font-size:12.5px;color:#000;white-space:nowrap;letter-spacing:-0.088px;">Allo<span style="text-decoration:underline">w</span> clipping</div>
<div style="left:476px;top:655px;width:78px;height:17px;border:1px dotted #000;"></div>
<div style="left:312px;top:693px;width:73px;height:21px;background:#e1e1e1;border:1px solid #8f8f8f;"></div>
<div style="left:327px;top:697.112px;font-size:12.5px;color:#000;white-space:nowrap;letter-spacing:-0.361px;"><span style="text-decoration:underline">M</span>anage</div>
<div style="left:392px;top:693px;width:73px;height:21px;background:#e1e1e1;border:1px solid #8f8f8f;"></div>
<div style="left:407.5px;top:697.112px;font-size:12.5px;color:#000;white-space:nowrap;letter-spacing:-0.351px;"><span style="text-decoration:underline">P</span>review</div>
<div style="left:515px;top:693px;width:73px;height:21px;background:#e1e1e1;border:1px solid #8f8f8f;"></div>
<div style="left:543px;top:697.112px;font-size:12.5px;color:#000;white-space:nowrap;letter-spacing:-0.530px;">OK</div>
<div style="left:598px;top:693px;width:73px;height:21px;background:#e1e1e1;border:1px solid #8f8f8f;"></div>
<div style="left:616.5px;top:697.112px;font-size:12.5px;color:#000;white-space:nowrap;letter-spacing:-0.485px;">Cancel</div>
<div style="left:681px;top:690px;width:27px;height:27px;background:#e1e1e1;border:1px solid #6e6e6e;"></div>
<svg style="left:681px;top:690px;" width="27" height="27" viewBox="0 0 27 27"><circle cx="13.5" cy="13.5" r="10.3" fill="#5c96fb"/><text x="13.5" y="19.3" text-anchor="middle" font-family="Liberation Sans" font-weight="bold" font-size="16" fill="#fff">?</text></svg>
</body></html>
